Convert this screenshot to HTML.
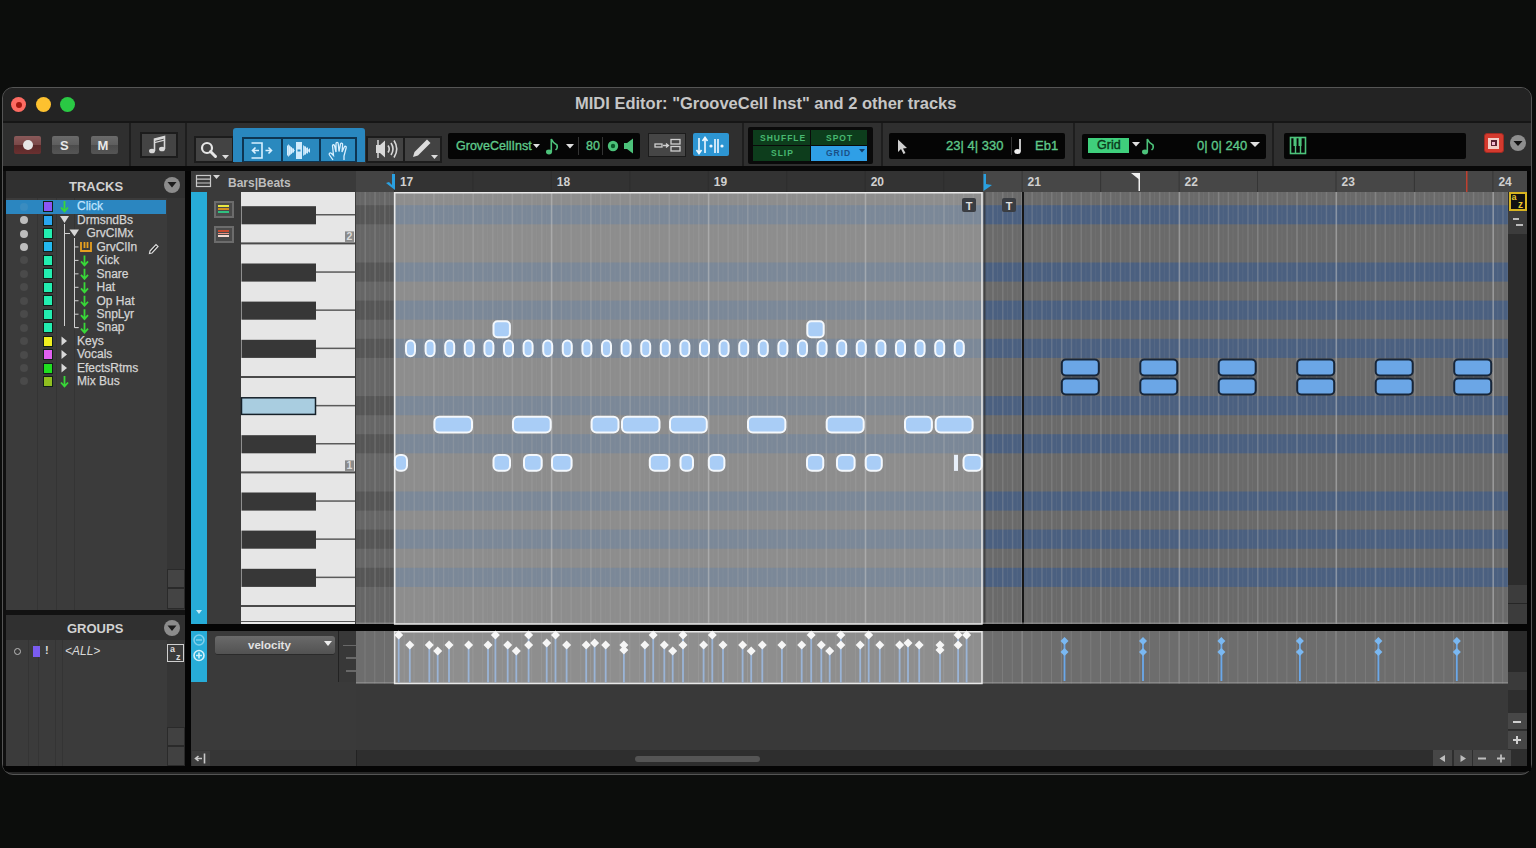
<!DOCTYPE html><html><head><meta charset="utf-8"><style>
*{margin:0;padding:0;box-sizing:border-box}
html,body{width:1536px;height:848px;overflow:hidden;background:#0c0d0c;font-family:"Liberation Sans",sans-serif}
.a{position:absolute}
.t{position:absolute;white-space:nowrap;line-height:1}
svg{position:absolute;left:0;top:0}
</style></head><body><div class="a" style="left:2px;top:87px;width:1530px;height:688px;background:#262626;border-radius:11px;border:1px solid #555"></div>
<div class="a" style="left:3px;top:88px;width:1528px;height:34px;background:#232323;border-radius:10px 10px 0 0"></div>
<div class="t" style="left:575px;top:95px;font-size:16.5px;font-weight:bold;color:#c6c6c6;">MIDI Editor: "GrooveCell Inst" and 2 other tracks</div>
<div class="a" style="left:11.0px;top:96.5px;width:15px;height:15px;background:#fd6b62;border-radius:50%"></div>
<div class="a" style="left:35.8px;top:96.5px;width:15px;height:15px;background:#fdc12f;border-radius:50%"></div>
<div class="a" style="left:60.2px;top:96.5px;width:15px;height:15px;background:#2ac944;border-radius:50%"></div>
<div class="a" style="left:15.5px;top:101.5px;width:6px;height:6px;background:#a0170f;border-radius:50%"></div>
<div class="a" style="left:3px;top:122px;width:1528px;height:44px;background:#2f2f2f;"></div>
<div class="a" style="left:3px;top:166px;width:1528px;height:5px;background:#080808;"></div>
<div class="a" style="left:129px;top:122px;width:1.5px;height:44px;background:#1e1e1e;"></div>
<div class="a" style="left:185px;top:122px;width:1.5px;height:44px;background:#1e1e1e;"></div>
<div class="a" style="left:742px;top:122px;width:1.5px;height:44px;background:#1e1e1e;"></div>
<div class="a" style="left:881px;top:122px;width:1.5px;height:44px;background:#1e1e1e;"></div>
<div class="a" style="left:1073px;top:122px;width:1.5px;height:44px;background:#1e1e1e;"></div>
<div class="a" style="left:1272px;top:122px;width:1.5px;height:44px;background:#1e1e1e;"></div>
<div class="a" style="left:14px;top:136px;width:27px;height:18px;background:#6a3a3a;border-radius:2px;background:linear-gradient(#8a5a5a 0,#7a4848 50%,#5a2a2a 51%,#6a3030 100%)"></div>
<div class="a" style="left:23px;top:140px;width:10px;height:10px;background:#e6e6e6;border-radius:50%"></div>
<div class="a" style="left:52px;top:136px;width:27px;height:18px;background:#555;border-radius:2px;background:linear-gradient(#6a6a6a 0,#5e5e5e 50%,#4c4c4c 51%,#555 100%)"></div>
<div class="t" style="left:60px;top:139px;font-size:13px;font-weight:bold;color:#e8e8e8;">S</div>
<div class="a" style="left:91px;top:136px;width:27px;height:18px;background:#555;border-radius:2px;background:linear-gradient(#6a6a6a 0,#5e5e5e 50%,#4c4c4c 51%,#555 100%)"></div>
<div class="t" style="left:97.5px;top:139px;font-size:13px;font-weight:bold;color:#e8e8e8;">M</div>
<div class="a" style="left:140px;top:132px;width:38px;height:26px;background:#444;border:2px solid #1c1c1c"></div>
<svg width="1536" height="848" style="pointer-events:none"><g fill="#d8d8d8" stroke="#d8d8d8"><ellipse cx="152" cy="151" rx="3" ry="2.3" stroke="none"/><ellipse cx="162" cy="149" rx="3" ry="2.3" stroke="none"/><path d="M154.5 151 V139 L164.5 136.5 V149" fill="none" stroke-width="1.6"/><path d="M154.5 139 L164.5 136.5 V138.5 L154.5 141Z" stroke="none"/><path d="M154.5 142 L164.5 139.5 V140.7 L154.5 143.2Z" stroke="none"/></g></svg>
<div class="a" style="left:194px;top:136px;width:40px;height:27px;background:#434343;border:2px solid #1c1c1c"></div>
<div class="a" style="left:233px;top:128px;width:132px;height:34px;background:#2987bf;border-radius:3px 3px 0 0"></div>
<div class="a" style="left:241.5px;top:136.5px;width:115px;height:25.5px;background:#0e3552;"></div>
<div class="a" style="left:243.5px;top:138.5px;width:37px;height:22px;background:#2a89be;"></div>
<div class="a" style="left:282.5px;top:138.5px;width:36px;height:22px;background:#2a89be;"></div>
<div class="a" style="left:320.5px;top:138.5px;width:34px;height:22px;background:#2a89be;"></div>
<div class="a" style="left:366px;top:136px;width:76px;height:27px;background:#1c1c1c;"></div>
<div class="a" style="left:368px;top:138px;width:35px;height:23px;background:#434343;"></div>
<div class="a" style="left:405px;top:138px;width:35px;height:23px;background:#434343;"></div>
<div class="a" style="left:448px;top:133px;width:192px;height:26px;background:#050505;border-radius:2px"></div>
<div class="t" style="left:456px;top:139.5px;font-size:12.5px;font-weight:normal;color:#5fc98a;-webkit-text-stroke:0.35px #5fc98a">GroveCellInst</div>
<div class="a" style="left:578px;top:137px;width:1px;height:18px;background:#333;"></div>
<div class="a" style="left:602px;top:137px;width:1px;height:18px;background:#333;"></div>
<div class="t" style="left:586px;top:139.5px;font-size:12.5px;font-weight:normal;color:#5fc98a;-webkit-text-stroke:0.35px #5fc98a">80</div>
<div class="a" style="left:648px;top:133px;width:38px;height:24px;background:#464646;border:1.5px solid #1c1c1c"></div>
<div class="a" style="left:693px;top:133px;width:36px;height:23px;background:#2d95d2;border-radius:2px"></div>
<div class="a" style="left:748px;top:127px;width:125px;height:37px;background:#0a0a0a;border-radius:2px"></div>
<div class="a" style="left:753px;top:130px;width:57px;height:15px;background:#0d3d1c;"></div>
<div class="a" style="left:811px;top:130px;width:56px;height:15px;background:#0d3d1c;"></div>
<div class="a" style="left:753px;top:146px;width:57px;height:14.5px;background:#0d3d1c;"></div>
<div class="a" style="left:811px;top:146px;width:56px;height:14.5px;background:#2f9fe6;"></div>
<div class="t" style="left:760px;top:133.5px;font-size:8.5px;font-weight:bold;color:#48b870;letter-spacing:1px">SHUFFLE</div>
<div class="t" style="left:826px;top:133.5px;font-size:8.5px;font-weight:bold;color:#48b870;letter-spacing:1px">SPOT</div>
<div class="t" style="left:771px;top:148.5px;font-size:8.5px;font-weight:bold;color:#48b870;letter-spacing:1px">SLIP</div>
<div class="t" style="left:826px;top:148.5px;font-size:8.5px;font-weight:bold;color:#1a4f86;letter-spacing:1px">GRID</div>
<svg width="1536" height="848"><path d="M859 149 H865 L862 152.5Z" fill="#12406e"/></svg>
<div class="a" style="left:889px;top:133px;width:176px;height:26px;background:#050505;border-radius:2px"></div>
<div class="t" style="left:946px;top:138.5px;font-size:13px;font-weight:normal;color:#5fc98a;-webkit-text-stroke:0.35px #5fc98a">23| 4| 330</div>
<div class="t" style="left:1035px;top:138.5px;font-size:13px;font-weight:normal;color:#5fc98a;-webkit-text-stroke:0.35px #5fc98a">Eb1</div>
<div class="a" style="left:1011px;top:137px;width:1px;height:18px;background:#333;"></div>
<div class="a" style="left:1082px;top:133.5px;width:184px;height:25.5px;background:#050505;border-radius:2px"></div>
<div class="a" style="left:1087.5px;top:137.5px;width:41.5px;height:15px;background:#3fcf7c;"></div>
<div class="t" style="left:1097px;top:139px;font-size:12.5px;font-weight:normal;color:#0b3a1b;-webkit-text-stroke:0.4px #0b3a1b">Grid</div>
<div class="t" style="left:1197px;top:138.5px;font-size:13px;font-weight:normal;color:#5fc98a;-webkit-text-stroke:0.35px #5fc98a">0| 0| 240</div>
<div class="a" style="left:1284px;top:133px;width:182px;height:26px;background:#050505;border-radius:2px"></div>
<div class="a" style="left:1483.5px;top:133px;width:20px;height:20px;background:#d43a2e;border-radius:3px;border:1.5px solid #a02a22"></div>
<div class="a" style="left:1488px;top:137.5px;width:11px;height:11px;background:#f2cfc8;"></div>
<div class="a" style="left:1490.5px;top:140px;width:6px;height:6px;background:#5a2232;"></div>
<div class="a" style="left:1492px;top:141.5px;width:3px;height:3px;background:#f0b8d0;"></div>
<div class="a" style="left:1510px;top:135px;width:16px;height:16px;background:#8e8e8e;border-radius:50%"></div>
<div class="a" style="left:3px;top:121px;width:1528px;height:1.5px;background:#161616;"></div>
<div class="a" style="left:3px;top:171px;width:3px;height:596px;background:#101010;"></div>
<div class="a" style="left:6px;top:171px;width:179px;height:439px;background:#3b3b3b;"></div>
<div class="a" style="left:6px;top:171px;width:179px;height:27px;background:#303030;"></div>
<div class="t" style="left:69px;top:179.5px;font-size:13px;font-weight:bold;color:#d2d2d2;">TRACKS</div>
<div class="a" style="left:164px;top:176.5px;width:16px;height:16px;background:#8c8c8c;border-radius:50%"></div>
<div class="a" style="left:167px;top:198px;width:18px;height:412px;background:#353535;"></div>
<div class="a" style="left:167px;top:569px;width:18px;height:19px;background:#444;border:1px solid #2a2a2a"></div>
<div class="a" style="left:167px;top:588px;width:18px;height:21px;background:#444;border:1px solid #2a2a2a"></div>
<div class="a" style="left:37px;top:198px;width:1px;height:412px;background:#343434;"></div>
<div class="a" style="left:56px;top:198px;width:1px;height:412px;background:#343434;"></div>
<div class="a" style="left:74px;top:198px;width:1px;height:412px;background:#343434;"></div>
<div class="a" style="left:6px;top:200px;width:160px;height:13.5px;background:#2b86c0;"></div>
<div class="a" style="left:19.5px;top:202.6px;width:8px;height:8px;background:#3a8cc0;border-radius:50%"></div>
<div class="a" style="left:43px;top:201.1px;width:10px;height:11px;background:#8b55f5;border:1.5px solid #102018"></div>
<div class="t" style="left:77px;top:200.4px;font-size:12px;font-weight:normal;color:#bfe4ff;-webkit-text-stroke:0.25px #bfe4ff">Click</div>
<div class="a" style="left:19.5px;top:216.04999999999998px;width:8px;height:8px;background:#bdbdbd;border-radius:50%"></div>
<div class="a" style="left:43px;top:214.54999999999998px;width:10px;height:11px;background:#2aa6f0;border:1.5px solid #102018"></div>
<div class="t" style="left:77px;top:213.85px;font-size:12px;font-weight:normal;color:#d4d4d4;-webkit-text-stroke:0.25px #d4d4d4">DrmsndBs</div>
<div class="a" style="left:19.5px;top:229.5px;width:8px;height:8px;background:#bdbdbd;border-radius:50%"></div>
<div class="a" style="left:43px;top:228.0px;width:10px;height:11px;background:#22eeb0;border:1.5px solid #102018"></div>
<div class="t" style="left:86.5px;top:227.3px;font-size:12px;font-weight:normal;color:#d4d4d4;-webkit-text-stroke:0.25px #d4d4d4">GrvClMx</div>
<div class="a" style="left:19.5px;top:242.95px;width:8px;height:8px;background:#bdbdbd;border-radius:50%"></div>
<div class="a" style="left:43px;top:241.45px;width:10px;height:11px;background:#23b8f0;border:1.5px solid #102018"></div>
<div class="t" style="left:96.5px;top:240.75px;font-size:12px;font-weight:normal;color:#d4d4d4;-webkit-text-stroke:0.25px #d4d4d4">GrvClIn</div>
<div class="a" style="left:19.5px;top:256.4px;width:8px;height:8px;background:#4a4a4a;border-radius:50%"></div>
<div class="a" style="left:43px;top:254.89999999999998px;width:10px;height:11px;background:#22eeb0;border:1.5px solid #102018"></div>
<div class="t" style="left:96.5px;top:254.2px;font-size:12px;font-weight:normal;color:#d4d4d4;-webkit-text-stroke:0.25px #d4d4d4">Kick</div>
<div class="a" style="left:19.5px;top:269.85px;width:8px;height:8px;background:#4a4a4a;border-radius:50%"></div>
<div class="a" style="left:43px;top:268.35px;width:10px;height:11px;background:#22eeb0;border:1.5px solid #102018"></div>
<div class="t" style="left:96.5px;top:267.65000000000003px;font-size:12px;font-weight:normal;color:#d4d4d4;-webkit-text-stroke:0.25px #d4d4d4">Snare</div>
<div class="a" style="left:19.5px;top:283.29999999999995px;width:8px;height:8px;background:#4a4a4a;border-radius:50%"></div>
<div class="a" style="left:43px;top:281.79999999999995px;width:10px;height:11px;background:#22eeb0;border:1.5px solid #102018"></div>
<div class="t" style="left:96.5px;top:281.09999999999997px;font-size:12px;font-weight:normal;color:#d4d4d4;-webkit-text-stroke:0.25px #d4d4d4">Hat</div>
<div class="a" style="left:19.5px;top:296.75px;width:8px;height:8px;background:#4a4a4a;border-radius:50%"></div>
<div class="a" style="left:43px;top:295.25px;width:10px;height:11px;background:#22eeb0;border:1.5px solid #102018"></div>
<div class="t" style="left:96.5px;top:294.55px;font-size:12px;font-weight:normal;color:#d4d4d4;-webkit-text-stroke:0.25px #d4d4d4">Op Hat</div>
<div class="a" style="left:19.5px;top:310.2px;width:8px;height:8px;background:#4a4a4a;border-radius:50%"></div>
<div class="a" style="left:43px;top:308.7px;width:10px;height:11px;background:#22eeb0;border:1.5px solid #102018"></div>
<div class="t" style="left:96.5px;top:308.0px;font-size:12px;font-weight:normal;color:#d4d4d4;-webkit-text-stroke:0.25px #d4d4d4">SnpLyr</div>
<div class="a" style="left:19.5px;top:323.65px;width:8px;height:8px;background:#4a4a4a;border-radius:50%"></div>
<div class="a" style="left:43px;top:322.15px;width:10px;height:11px;background:#22eeb0;border:1.5px solid #102018"></div>
<div class="t" style="left:96.5px;top:321.45px;font-size:12px;font-weight:normal;color:#d4d4d4;-webkit-text-stroke:0.25px #d4d4d4">Snap</div>
<div class="a" style="left:19.5px;top:337.1px;width:8px;height:8px;background:#4a4a4a;border-radius:50%"></div>
<div class="a" style="left:43px;top:335.6px;width:10px;height:11px;background:#f0f020;border:1.5px solid #102018"></div>
<div class="t" style="left:77px;top:334.90000000000003px;font-size:12px;font-weight:normal;color:#d4d4d4;-webkit-text-stroke:0.25px #d4d4d4">Keys</div>
<div class="a" style="left:19.5px;top:350.54999999999995px;width:8px;height:8px;background:#4a4a4a;border-radius:50%"></div>
<div class="a" style="left:43px;top:349.04999999999995px;width:10px;height:11px;background:#e060f0;border:1.5px solid #102018"></div>
<div class="t" style="left:77px;top:348.34999999999997px;font-size:12px;font-weight:normal;color:#d4d4d4;-webkit-text-stroke:0.25px #d4d4d4">Vocals</div>
<div class="a" style="left:19.5px;top:364.0px;width:8px;height:8px;background:#4a4a4a;border-radius:50%"></div>
<div class="a" style="left:43px;top:362.5px;width:10px;height:11px;background:#20e020;border:1.5px solid #102018"></div>
<div class="t" style="left:77px;top:361.8px;font-size:12px;font-weight:normal;color:#d4d4d4;-webkit-text-stroke:0.25px #d4d4d4">EfectsRtms</div>
<div class="a" style="left:19.5px;top:377.45px;width:8px;height:8px;background:#4a4a4a;border-radius:50%"></div>
<div class="a" style="left:43px;top:375.95px;width:10px;height:11px;background:#90c020;border:1.5px solid #102018"></div>
<div class="t" style="left:77px;top:375.25px;font-size:12px;font-weight:normal;color:#d4d4d4;-webkit-text-stroke:0.25px #d4d4d4">Mix Bus</div>
<svg width="1536" height="848"><g stroke="#d0d0d0" stroke-width="1" fill="none"><path d="M64.5 224 V326"/><path d="M74.5 238 V327.5 H78.5"/><path d="M74.5 246.95 H78.5"/><path d="M74.5 260.4 H78.5"/><path d="M74.5 273.85 H78.5"/><path d="M74.5 287.29999999999995 H78.5"/><path d="M74.5 300.75 H78.5"/><path d="M74.5 314.2 H78.5"/><path d="M74.5 327.65 H78.5"/><path d="M64.5 233.5 H70"/></g><g fill="#d8d8d8"><path d="M60 216 H69 L64.5 223Z"/><path d="M69.5 229.5 H79 L74.5 236.5Z"/><path d="M61.5 336.6 L67 341.1 L61.5 345.6Z"/><path d="M61.5 350.04999999999995 L67 354.54999999999995 L61.5 359.04999999999995Z"/><path d="M61.5 363.5 L67 368.0 L61.5 372.5Z"/></g><g stroke="#38d838" stroke-width="1.8" fill="none"><path d="M64.5 201 V211 M61 207.5 L64.5 211.5 L68 207.5"/><path d="M64.5 376 V386 M61 382.5 L64.5 386.5 L68 382.5"/><path d="M84.5 255.39999999999998 V264.9 M81 261.4 L84.5 265.4 L88 261.4"/><path d="M84.5 268.85 V278.35 M81 274.85 L84.5 278.85 L88 274.85"/><path d="M84.5 282.29999999999995 V291.79999999999995 M81 288.29999999999995 L84.5 292.29999999999995 L88 288.29999999999995"/><path d="M84.5 295.75 V305.25 M81 301.75 L84.5 305.75 L88 301.75"/><path d="M84.5 309.2 V318.7 M81 315.2 L84.5 319.2 L88 315.2"/><path d="M84.5 322.65 V332.15 M81 328.65 L84.5 332.65 L88 328.65"/></g><path d="M81 242 V251 H91 V242 M84.5 242 V248 M87.5 242 V248" stroke="#e8a020" stroke-width="1.8" fill="none"/><path d="M150 251 L156 244.5 L158 246.5 L152 253 L149.5 253.5Z" fill="#222" stroke="#ddd" stroke-width="1.2"/></svg>
<div class="a" style="left:6px;top:610px;width:179px;height:5px;background:#121212;"></div>
<div class="a" style="left:6px;top:615px;width:179px;height:151px;background:#3b3b3b;"></div>
<div class="a" style="left:6px;top:615px;width:179px;height:25px;background:#303030;"></div>
<div class="t" style="left:67px;top:622px;font-size:13px;font-weight:bold;color:#d2d2d2;">GROUPS</div>
<div class="a" style="left:164px;top:620px;width:16px;height:16px;background:#8c8c8c;border-radius:50%"></div>
<div class="a" style="left:167px;top:640px;width:18px;height:126px;background:#353535;"></div>
<div class="a" style="left:167px;top:727px;width:18px;height:19px;background:#414141;border:1px solid #2a2a2a"></div>
<div class="a" style="left:167px;top:746px;width:18px;height:20px;background:#414141;border:1px solid #2a2a2a"></div>
<div class="a" style="left:28px;top:640px;width:1px;height:126px;background:#343434;"></div>
<div class="a" style="left:38px;top:640px;width:1px;height:126px;background:#343434;"></div>
<div class="a" style="left:55px;top:640px;width:1px;height:126px;background:#343434;"></div>
<div class="a" style="left:62px;top:640px;width:1px;height:126px;background:#343434;"></div>
<div class="a" style="left:13.5px;top:647.5px;width:7px;height:7px;background:transparent;border:1px solid #bbb;border-radius:50%"></div>
<div class="a" style="left:33px;top:645.5px;width:7px;height:11px;background:#7a5cf0;"></div>
<div class="t" style="left:45px;top:645px;font-size:11px;font-weight:bold;color:#ddd;">!</div>
<div class="t" style="left:65px;top:645px;font-size:12px;font-weight:normal;color:#d8d8d8;font-style:italic">&lt;ALL&gt;</div>
<div class="a" style="left:167px;top:644px;width:17px;height:18px;background:#3b3b3b;border:1px solid #cfcfcf"></div>
<div class="a" style="left:185px;top:171px;width:6px;height:596px;background:#050505;"></div>
<div class="a" style="left:191px;top:171px;width:165px;height:21px;background:#3a3a3a;"></div>
<div class="t" style="left:228px;top:176.5px;font-size:12px;font-weight:bold;color:#bdbdbd;">Bars|Beats</div>
<div class="a" style="left:356px;top:171px;width:37.9px;height:21px;background:#444;"></div>
<div class="a" style="left:393.9px;top:171px;width:589px;height:21px;background:#333;"></div>
<div class="a" style="left:982.9px;top:171px;width:544px;height:21px;background:#474747;"></div>
<div class="a" style="left:191px;top:192px;width:16px;height:432px;background:#27acd8;"></div>
<div class="a" style="left:207px;top:192px;width:34px;height:432px;background:#3a3a3a;"></div>
<div class="a" style="left:213.5px;top:201px;width:20.5px;height:17px;background:#4a4a4a;border:2px solid #6c6c6c"></div>
<div class="a" style="left:213.5px;top:225.5px;width:20.5px;height:17px;background:#4a4a4a;border:2px solid #6c6c6c"></div>
<div class="a" style="left:218px;top:205px;width:11px;height:2px;background:#e8e840;"></div>
<div class="a" style="left:218px;top:208px;width:11px;height:1.5px;background:#d09020;"></div>
<div class="a" style="left:218px;top:210.5px;width:11px;height:2px;background:#30c080;"></div>
<div class="a" style="left:218px;top:229.5px;width:11px;height:2px;background:#c84a30;"></div>
<div class="a" style="left:218px;top:232.5px;width:11px;height:1.5px;background:#f09080;"></div>
<div class="a" style="left:218px;top:235px;width:11px;height:2px;background:#f4d8d0;"></div>
<div class="a" style="left:241px;top:192px;width:114px;height:432px;background:#e6e6e6;"></div>
<div class="a" style="left:354.5px;top:192px;width:2px;height:432px;background:#3e3e3e"></div>
<div class="a" style="left:1508px;top:192px;width:19px;height:432px;background:#2c2c2c;"></div>
<div class="a" style="left:1509px;top:192px;width:18px;height:19px;background:#111;border:2px solid #d8b420"></div>
<div class="t" style="left:1511.5px;top:193px;font-size:9px;font-weight:bold;color:#e8c830">a</div>
<div class="t" style="left:1518px;top:200px;font-size:10px;font-weight:bold;color:#e8c830">z</div>
<div class="a" style="left:1508px;top:211px;width:19px;height:23px;background:#3c3c3c;"></div>
<div class="a" style="left:1513px;top:218px;width:6px;height:1.5px;background:#bbb;"></div>
<div class="a" style="left:1516px;top:224px;width:7px;height:1.5px;background:#bbb;"></div>
<div class="a" style="left:1508px;top:585px;width:19px;height:19px;background:#3c3c3c;border-bottom:1px solid #262626"></div>
<div class="a" style="left:1508px;top:604px;width:19px;height:20px;background:#3c3c3c;"></div>
<div class="a" style="left:1527px;top:171px;width:4px;height:600px;background:#050505;"></div>
<div class="a" style="left:185px;top:624px;width:1342px;height:7px;background:#050505;"></div>
<div class="a" style="left:191px;top:631px;width:16px;height:51px;background:#27acd8;"></div>
<svg width="1536" height="848"><circle cx="199" cy="640" r="5" fill="none" stroke="#7fd0ec" stroke-width="1.5"/><path d="M196 640 H202" stroke="#7fd0ec" stroke-width="1.5"/><circle cx="199" cy="655.5" r="5" fill="none" stroke="#d0f0fa" stroke-width="1.6"/><path d="M196 655.5 H202 M199 652.5 V658.5" stroke="#d0f0fa" stroke-width="1.6"/><path d="M196 610 H202 L199 614Z" fill="#c8ecf8"/></svg>
<div class="a" style="left:207px;top:631px;width:131px;height:51px;background:#3a3a3a;"></div>
<div class="a" style="left:215px;top:636px;width:120px;height:19px;background:#5a5a5a;border-radius:3px;background:linear-gradient(#6a6a6a,#525252);border-bottom:1px solid #2a2a2a"></div>
<div class="t" style="left:248px;top:640px;font-size:11.5px;font-weight:bold;color:#e2e2e2;">velocity</div>
<svg width="1536" height="848"><path d="M324 641 H332 L328 646Z" fill="#eee"/></svg>
<div class="a" style="left:338px;top:631px;width:18px;height:51px;background:#383838;"></div>
<div class="a" style="left:338px;top:631px;width:1px;height:51px;background:#222;"></div>
<div class="a" style="left:343px;top:644.5px;width:13px;height:1.5px;background:#686868;"></div>
<div class="a" style="left:346px;top:657px;width:10px;height:1.5px;background:#686868;"></div>
<div class="a" style="left:346px;top:670px;width:10px;height:1.5px;background:#686868;"></div>
<div class="a" style="left:1508px;top:631px;width:19px;height:41px;background:#2a2a2a;"></div>
<div class="a" style="left:1508px;top:672px;width:19px;height:18px;background:#3a3a3a;"></div>
<div class="a" style="left:191px;top:682px;width:1317px;height:68px;background:#393939;"></div>
<div class="a" style="left:191px;top:682px;width:165px;height:68px;background:#3a3a3a;"></div>
<div class="a" style="left:1508px;top:690px;width:19px;height:60px;background:#2e2e2e;"></div>
<div class="a" style="left:1508px;top:713px;width:19px;height:17px;background:#474747;border-bottom:1px solid #2a2a2a"></div>
<div class="a" style="left:1508px;top:731px;width:19px;height:18px;background:#474747;"></div>
<div class="a" style="left:1513px;top:721px;width:8px;height:1.5px;background:#cfcfcf;"></div>
<div class="a" style="left:1513px;top:739px;width:8px;height:1.5px;background:#cfcfcf;"></div>
<div class="a" style="left:1516.3px;top:735.7px;width:1.5px;height:8px;background:#cfcfcf;"></div>
<div class="a" style="left:191px;top:750px;width:1336px;height:17.5px;background:#2e2e2e;"></div>
<div class="a" style="left:191px;top:750px;width:165px;height:17.5px;background:#363636;"></div>
<div class="a" style="left:192px;top:751px;width:18px;height:15px;background:#3e3e3e;"></div>
<div class="a" style="left:356px;top:750px;width:1px;height:17.5px;background:#222;"></div>
<svg width="1536" height="848"><path d="M202 758.5 H196 M198.5 756 L195.5 758.5 L198.5 761 M204.5 753.5 V763.5" stroke="#c8c8c8" stroke-width="1.6" fill="none"/></svg>
<div class="a" style="left:635px;top:756px;width:125px;height:6px;background:#555;border-radius:3px"></div>
<div class="a" style="left:1433px;top:750px;width:18.5px;height:17.5px;background:#474747;"></div>
<div class="a" style="left:1453.5px;top:750px;width:18.5px;height:17.5px;background:#474747;"></div>
<div class="a" style="left:1473px;top:750px;width:18.5px;height:17.5px;background:#474747;"></div>
<div class="a" style="left:1492px;top:750px;width:18.5px;height:17.5px;background:#474747;"></div>
<svg width="1536" height="848"><path d="M1439.5 758.5 L1445 755 V762Z M1466 758.5 L1460.5 755 V762Z" fill="#bdbdbd"/><path d="M1478 758.5 H1486 M1497 758.5 H1505 M1501 754.5 V762.5" stroke="#bdbdbd" stroke-width="1.8"/></svg>
<div class="a" style="left:3px;top:766px;width:1528px;height:5.5px;background:#050505;border-radius:0 0 7px 7px"></div>
<div class="a" style="left:241px;top:620.5px;width:114px;height:1.5px;background:#555;"></div>
<svg width="1536" height="848"><rect x="356" y="192" width="1152" height="432" fill="#6a6a6a"/><rect x="356" y="192" width="37.9" height="432" fill="#666"/><rect x="393.9" y="192" width="588.8000000000001" height="432" fill="#8d8d8d"/><rect x="356" y="205.2" width="37.9" height="19.1" fill="#565656"/><rect x="982.7" y="205.2" width="525.3" height="19.1" fill="#4b6080"/><rect x="393.9" y="205.2" width="588.8" height="19.1" fill="#7b8898"/><rect x="356" y="262.5" width="37.9" height="19.1" fill="#565656"/><rect x="982.7" y="262.5" width="525.3" height="19.1" fill="#4b6080"/><rect x="393.9" y="262.5" width="588.8" height="19.1" fill="#7b8898"/><rect x="356" y="300.6" width="37.9" height="19.1" fill="#565656"/><rect x="982.7" y="300.6" width="525.3" height="19.1" fill="#4b6080"/><rect x="393.9" y="300.6" width="588.8" height="19.1" fill="#7b8898"/><rect x="356" y="338.8" width="37.9" height="19.1" fill="#565656"/><rect x="982.7" y="338.8" width="525.3" height="19.1" fill="#4b6080"/><rect x="393.9" y="338.8" width="588.8" height="19.1" fill="#7b8898"/><rect x="356" y="396.1" width="37.9" height="19.1" fill="#565656"/><rect x="982.7" y="396.1" width="525.3" height="19.1" fill="#4b6080"/><rect x="393.9" y="396.1" width="588.8" height="19.1" fill="#7b8898"/><rect x="356" y="434.2" width="37.9" height="19.1" fill="#565656"/><rect x="982.7" y="434.2" width="525.3" height="19.1" fill="#4b6080"/><rect x="393.9" y="434.2" width="588.8" height="19.1" fill="#7b8898"/><rect x="356" y="491.5" width="37.9" height="19.1" fill="#565656"/><rect x="982.7" y="491.5" width="525.3" height="19.1" fill="#4b6080"/><rect x="393.9" y="491.5" width="588.8" height="19.1" fill="#7b8898"/><rect x="356" y="529.6" width="37.9" height="19.1" fill="#565656"/><rect x="982.7" y="529.6" width="525.3" height="19.1" fill="#4b6080"/><rect x="393.9" y="529.6" width="588.8" height="19.1" fill="#7b8898"/><rect x="356" y="567.8" width="37.9" height="19.1" fill="#565656"/><rect x="982.7" y="567.8" width="525.3" height="19.1" fill="#4b6080"/><rect x="393.9" y="567.8" width="588.8" height="19.1" fill="#7b8898"/><rect x="364.5" y="192" width="1.5" height="432" fill="#b0b0b0" opacity="0.24"/><rect x="374.3" y="192" width="1.5" height="432" fill="#b0b0b0" opacity="0.24"/><rect x="384.1" y="192" width="1.5" height="432" fill="#b0b0b0" opacity="0.24"/><rect x="393.9" y="192" width="1.6" height="432" fill="#c8c8c8" opacity="0.5"/><rect x="403.7" y="192" width="1.5" height="432" fill="#b0b0b0" opacity="0.25"/><rect x="413.5" y="192" width="1.5" height="432" fill="#b0b0b0" opacity="0.25"/><rect x="423.3" y="192" width="1.5" height="432" fill="#b0b0b0" opacity="0.25"/><rect x="433.1" y="192" width="1.6" height="432" fill="#b8b8b8" opacity="0.32"/><rect x="442.9" y="192" width="1.5" height="432" fill="#b0b0b0" opacity="0.25"/><rect x="452.7" y="192" width="1.5" height="432" fill="#b0b0b0" opacity="0.25"/><rect x="462.6" y="192" width="1.5" height="432" fill="#b0b0b0" opacity="0.25"/><rect x="472.4" y="192" width="1.6" height="432" fill="#b8b8b8" opacity="0.32"/><rect x="482.2" y="192" width="1.5" height="432" fill="#b0b0b0" opacity="0.25"/><rect x="492.0" y="192" width="1.5" height="432" fill="#b0b0b0" opacity="0.25"/><rect x="501.8" y="192" width="1.5" height="432" fill="#b0b0b0" opacity="0.25"/><rect x="511.6" y="192" width="1.6" height="432" fill="#b8b8b8" opacity="0.32"/><rect x="521.4" y="192" width="1.5" height="432" fill="#b0b0b0" opacity="0.25"/><rect x="531.2" y="192" width="1.5" height="432" fill="#b0b0b0" opacity="0.25"/><rect x="541.0" y="192" width="1.5" height="432" fill="#b0b0b0" opacity="0.25"/><rect x="550.8" y="192" width="1.6" height="432" fill="#c8c8c8" opacity="0.5"/><rect x="560.6" y="192" width="1.5" height="432" fill="#b0b0b0" opacity="0.25"/><rect x="570.4" y="192" width="1.5" height="432" fill="#b0b0b0" opacity="0.25"/><rect x="580.3" y="192" width="1.5" height="432" fill="#b0b0b0" opacity="0.25"/><rect x="590.1" y="192" width="1.6" height="432" fill="#b8b8b8" opacity="0.32"/><rect x="599.9" y="192" width="1.5" height="432" fill="#b0b0b0" opacity="0.25"/><rect x="609.7" y="192" width="1.5" height="432" fill="#b0b0b0" opacity="0.25"/><rect x="619.5" y="192" width="1.5" height="432" fill="#b0b0b0" opacity="0.25"/><rect x="629.3" y="192" width="1.6" height="432" fill="#b8b8b8" opacity="0.32"/><rect x="639.1" y="192" width="1.5" height="432" fill="#b0b0b0" opacity="0.25"/><rect x="648.9" y="192" width="1.5" height="432" fill="#b0b0b0" opacity="0.25"/><rect x="658.7" y="192" width="1.5" height="432" fill="#b0b0b0" opacity="0.25"/><rect x="668.5" y="192" width="1.6" height="432" fill="#b8b8b8" opacity="0.32"/><rect x="678.3" y="192" width="1.5" height="432" fill="#b0b0b0" opacity="0.25"/><rect x="688.1" y="192" width="1.5" height="432" fill="#b0b0b0" opacity="0.25"/><rect x="698.0" y="192" width="1.5" height="432" fill="#b0b0b0" opacity="0.25"/><rect x="707.8" y="192" width="1.6" height="432" fill="#c8c8c8" opacity="0.5"/><rect x="717.6" y="192" width="1.5" height="432" fill="#b0b0b0" opacity="0.25"/><rect x="727.4" y="192" width="1.5" height="432" fill="#b0b0b0" opacity="0.25"/><rect x="737.2" y="192" width="1.5" height="432" fill="#b0b0b0" opacity="0.25"/><rect x="747.0" y="192" width="1.6" height="432" fill="#b8b8b8" opacity="0.32"/><rect x="756.8" y="192" width="1.5" height="432" fill="#b0b0b0" opacity="0.25"/><rect x="766.6" y="192" width="1.5" height="432" fill="#b0b0b0" opacity="0.25"/><rect x="776.4" y="192" width="1.5" height="432" fill="#b0b0b0" opacity="0.25"/><rect x="786.2" y="192" width="1.6" height="432" fill="#b8b8b8" opacity="0.32"/><rect x="796.0" y="192" width="1.5" height="432" fill="#b0b0b0" opacity="0.25"/><rect x="805.8" y="192" width="1.5" height="432" fill="#b0b0b0" opacity="0.25"/><rect x="815.6" y="192" width="1.5" height="432" fill="#b0b0b0" opacity="0.25"/><rect x="825.5" y="192" width="1.6" height="432" fill="#b8b8b8" opacity="0.32"/><rect x="835.3" y="192" width="1.5" height="432" fill="#b0b0b0" opacity="0.25"/><rect x="845.1" y="192" width="1.5" height="432" fill="#b0b0b0" opacity="0.25"/><rect x="854.9" y="192" width="1.5" height="432" fill="#b0b0b0" opacity="0.25"/><rect x="864.7" y="192" width="1.6" height="432" fill="#c8c8c8" opacity="0.5"/><rect x="874.5" y="192" width="1.5" height="432" fill="#b0b0b0" opacity="0.25"/><rect x="884.3" y="192" width="1.5" height="432" fill="#b0b0b0" opacity="0.25"/><rect x="894.1" y="192" width="1.5" height="432" fill="#b0b0b0" opacity="0.25"/><rect x="903.9" y="192" width="1.6" height="432" fill="#b8b8b8" opacity="0.32"/><rect x="913.7" y="192" width="1.5" height="432" fill="#b0b0b0" opacity="0.25"/><rect x="923.5" y="192" width="1.5" height="432" fill="#b0b0b0" opacity="0.25"/><rect x="933.3" y="192" width="1.5" height="432" fill="#b0b0b0" opacity="0.25"/><rect x="943.2" y="192" width="1.6" height="432" fill="#b8b8b8" opacity="0.32"/><rect x="953.0" y="192" width="1.5" height="432" fill="#b0b0b0" opacity="0.25"/><rect x="962.8" y="192" width="1.5" height="432" fill="#b0b0b0" opacity="0.25"/><rect x="972.6" y="192" width="1.5" height="432" fill="#b0b0b0" opacity="0.25"/><rect x="982.4" y="192" width="1.6" height="432" fill="#b8b8b8" opacity="0.32"/><rect x="992.2" y="192" width="1.5" height="432" fill="#b0b0b0" opacity="0.24"/><rect x="1002.0" y="192" width="1.5" height="432" fill="#b0b0b0" opacity="0.24"/><rect x="1011.8" y="192" width="1.5" height="432" fill="#b0b0b0" opacity="0.24"/><rect x="1021.6" y="192" width="1.6" height="432" fill="#c8c8c8" opacity="0.5"/><rect x="1031.4" y="192" width="1.5" height="432" fill="#b0b0b0" opacity="0.24"/><rect x="1041.2" y="192" width="1.5" height="432" fill="#b0b0b0" opacity="0.24"/><rect x="1051.0" y="192" width="1.5" height="432" fill="#b0b0b0" opacity="0.24"/><rect x="1060.9" y="192" width="1.6" height="432" fill="#b8b8b8" opacity="0.3"/><rect x="1070.7" y="192" width="1.5" height="432" fill="#b0b0b0" opacity="0.24"/><rect x="1080.5" y="192" width="1.5" height="432" fill="#b0b0b0" opacity="0.24"/><rect x="1090.3" y="192" width="1.5" height="432" fill="#b0b0b0" opacity="0.24"/><rect x="1100.1" y="192" width="1.6" height="432" fill="#b8b8b8" opacity="0.3"/><rect x="1109.9" y="192" width="1.5" height="432" fill="#b0b0b0" opacity="0.24"/><rect x="1119.7" y="192" width="1.5" height="432" fill="#b0b0b0" opacity="0.24"/><rect x="1129.5" y="192" width="1.5" height="432" fill="#b0b0b0" opacity="0.24"/><rect x="1139.3" y="192" width="1.6" height="432" fill="#b8b8b8" opacity="0.3"/><rect x="1149.1" y="192" width="1.5" height="432" fill="#b0b0b0" opacity="0.24"/><rect x="1158.9" y="192" width="1.5" height="432" fill="#b0b0b0" opacity="0.24"/><rect x="1168.7" y="192" width="1.5" height="432" fill="#b0b0b0" opacity="0.24"/><rect x="1178.6" y="192" width="1.6" height="432" fill="#c8c8c8" opacity="0.5"/><rect x="1188.4" y="192" width="1.5" height="432" fill="#b0b0b0" opacity="0.24"/><rect x="1198.2" y="192" width="1.5" height="432" fill="#b0b0b0" opacity="0.24"/><rect x="1208.0" y="192" width="1.5" height="432" fill="#b0b0b0" opacity="0.24"/><rect x="1217.8" y="192" width="1.6" height="432" fill="#b8b8b8" opacity="0.3"/><rect x="1227.6" y="192" width="1.5" height="432" fill="#b0b0b0" opacity="0.24"/><rect x="1237.4" y="192" width="1.5" height="432" fill="#b0b0b0" opacity="0.24"/><rect x="1247.2" y="192" width="1.5" height="432" fill="#b0b0b0" opacity="0.24"/><rect x="1257.0" y="192" width="1.6" height="432" fill="#b8b8b8" opacity="0.3"/><rect x="1266.8" y="192" width="1.5" height="432" fill="#b0b0b0" opacity="0.24"/><rect x="1276.6" y="192" width="1.5" height="432" fill="#b0b0b0" opacity="0.24"/><rect x="1286.4" y="192" width="1.5" height="432" fill="#b0b0b0" opacity="0.24"/><rect x="1296.2" y="192" width="1.6" height="432" fill="#b8b8b8" opacity="0.3"/><rect x="1306.1" y="192" width="1.5" height="432" fill="#b0b0b0" opacity="0.24"/><rect x="1315.9" y="192" width="1.5" height="432" fill="#b0b0b0" opacity="0.24"/><rect x="1325.7" y="192" width="1.5" height="432" fill="#b0b0b0" opacity="0.24"/><rect x="1335.5" y="192" width="1.6" height="432" fill="#c8c8c8" opacity="0.5"/><rect x="1345.3" y="192" width="1.5" height="432" fill="#b0b0b0" opacity="0.24"/><rect x="1355.1" y="192" width="1.5" height="432" fill="#b0b0b0" opacity="0.24"/><rect x="1364.9" y="192" width="1.5" height="432" fill="#b0b0b0" opacity="0.24"/><rect x="1374.7" y="192" width="1.6" height="432" fill="#b8b8b8" opacity="0.3"/><rect x="1384.5" y="192" width="1.5" height="432" fill="#b0b0b0" opacity="0.24"/><rect x="1394.3" y="192" width="1.5" height="432" fill="#b0b0b0" opacity="0.24"/><rect x="1404.1" y="192" width="1.5" height="432" fill="#b0b0b0" opacity="0.24"/><rect x="1413.9" y="192" width="1.6" height="432" fill="#b8b8b8" opacity="0.3"/><rect x="1423.8" y="192" width="1.5" height="432" fill="#b0b0b0" opacity="0.24"/><rect x="1433.6" y="192" width="1.5" height="432" fill="#b0b0b0" opacity="0.24"/><rect x="1443.4" y="192" width="1.5" height="432" fill="#b0b0b0" opacity="0.24"/><rect x="1453.2" y="192" width="1.6" height="432" fill="#b8b8b8" opacity="0.3"/><rect x="1463.0" y="192" width="1.5" height="432" fill="#b0b0b0" opacity="0.24"/><rect x="1472.8" y="192" width="1.5" height="432" fill="#b0b0b0" opacity="0.24"/><rect x="1482.6" y="192" width="1.5" height="432" fill="#b0b0b0" opacity="0.24"/><rect x="1492.4" y="192" width="1.6" height="432" fill="#c8c8c8" opacity="0.5"/><rect x="1502.2" y="192" width="1.5" height="432" fill="#b0b0b0" opacity="0.24"/><rect x="359.6" y="192" width="1" height="432" fill="#b0b0b0" opacity="0.1"/><rect x="369.4" y="192" width="1" height="432" fill="#b0b0b0" opacity="0.1"/><rect x="379.2" y="192" width="1" height="432" fill="#b0b0b0" opacity="0.1"/><rect x="389.0" y="192" width="1" height="432" fill="#b0b0b0" opacity="0.1"/><rect x="398.8" y="192" width="1" height="432" fill="#b0b0b0" opacity="0.1"/><rect x="408.6" y="192" width="1" height="432" fill="#b0b0b0" opacity="0.1"/><rect x="418.4" y="192" width="1" height="432" fill="#b0b0b0" opacity="0.1"/><rect x="428.2" y="192" width="1" height="432" fill="#b0b0b0" opacity="0.1"/><rect x="438.0" y="192" width="1" height="432" fill="#b0b0b0" opacity="0.1"/><rect x="447.8" y="192" width="1" height="432" fill="#b0b0b0" opacity="0.1"/><rect x="457.7" y="192" width="1" height="432" fill="#b0b0b0" opacity="0.1"/><rect x="467.5" y="192" width="1" height="432" fill="#b0b0b0" opacity="0.1"/><rect x="477.3" y="192" width="1" height="432" fill="#b0b0b0" opacity="0.1"/><rect x="487.1" y="192" width="1" height="432" fill="#b0b0b0" opacity="0.1"/><rect x="496.9" y="192" width="1" height="432" fill="#b0b0b0" opacity="0.1"/><rect x="506.7" y="192" width="1" height="432" fill="#b0b0b0" opacity="0.1"/><rect x="516.5" y="192" width="1" height="432" fill="#b0b0b0" opacity="0.1"/><rect x="526.3" y="192" width="1" height="432" fill="#b0b0b0" opacity="0.1"/><rect x="536.1" y="192" width="1" height="432" fill="#b0b0b0" opacity="0.1"/><rect x="545.9" y="192" width="1" height="432" fill="#b0b0b0" opacity="0.1"/><rect x="555.7" y="192" width="1" height="432" fill="#b0b0b0" opacity="0.1"/><rect x="565.5" y="192" width="1" height="432" fill="#b0b0b0" opacity="0.1"/><rect x="575.4" y="192" width="1" height="432" fill="#b0b0b0" opacity="0.1"/><rect x="585.2" y="192" width="1" height="432" fill="#b0b0b0" opacity="0.1"/><rect x="595.0" y="192" width="1" height="432" fill="#b0b0b0" opacity="0.1"/><rect x="604.8" y="192" width="1" height="432" fill="#b0b0b0" opacity="0.1"/><rect x="614.6" y="192" width="1" height="432" fill="#b0b0b0" opacity="0.1"/><rect x="624.4" y="192" width="1" height="432" fill="#b0b0b0" opacity="0.1"/><rect x="634.2" y="192" width="1" height="432" fill="#b0b0b0" opacity="0.1"/><rect x="644.0" y="192" width="1" height="432" fill="#b0b0b0" opacity="0.1"/><rect x="653.8" y="192" width="1" height="432" fill="#b0b0b0" opacity="0.1"/><rect x="663.6" y="192" width="1" height="432" fill="#b0b0b0" opacity="0.1"/><rect x="673.4" y="192" width="1" height="432" fill="#b0b0b0" opacity="0.1"/><rect x="683.2" y="192" width="1" height="432" fill="#b0b0b0" opacity="0.1"/><rect x="693.0" y="192" width="1" height="432" fill="#b0b0b0" opacity="0.1"/><rect x="702.9" y="192" width="1" height="432" fill="#b0b0b0" opacity="0.1"/><rect x="712.7" y="192" width="1" height="432" fill="#b0b0b0" opacity="0.1"/><rect x="722.5" y="192" width="1" height="432" fill="#b0b0b0" opacity="0.1"/><rect x="732.3" y="192" width="1" height="432" fill="#b0b0b0" opacity="0.1"/><rect x="742.1" y="192" width="1" height="432" fill="#b0b0b0" opacity="0.1"/><rect x="751.9" y="192" width="1" height="432" fill="#b0b0b0" opacity="0.1"/><rect x="761.7" y="192" width="1" height="432" fill="#b0b0b0" opacity="0.1"/><rect x="771.5" y="192" width="1" height="432" fill="#b0b0b0" opacity="0.1"/><rect x="781.3" y="192" width="1" height="432" fill="#b0b0b0" opacity="0.1"/><rect x="791.1" y="192" width="1" height="432" fill="#b0b0b0" opacity="0.1"/><rect x="800.9" y="192" width="1" height="432" fill="#b0b0b0" opacity="0.1"/><rect x="810.7" y="192" width="1" height="432" fill="#b0b0b0" opacity="0.1"/><rect x="820.6" y="192" width="1" height="432" fill="#b0b0b0" opacity="0.1"/><rect x="830.4" y="192" width="1" height="432" fill="#b0b0b0" opacity="0.1"/><rect x="840.2" y="192" width="1" height="432" fill="#b0b0b0" opacity="0.1"/><rect x="850.0" y="192" width="1" height="432" fill="#b0b0b0" opacity="0.1"/><rect x="859.8" y="192" width="1" height="432" fill="#b0b0b0" opacity="0.1"/><rect x="869.6" y="192" width="1" height="432" fill="#b0b0b0" opacity="0.1"/><rect x="879.4" y="192" width="1" height="432" fill="#b0b0b0" opacity="0.1"/><rect x="889.2" y="192" width="1" height="432" fill="#b0b0b0" opacity="0.1"/><rect x="899.0" y="192" width="1" height="432" fill="#b0b0b0" opacity="0.1"/><rect x="908.8" y="192" width="1" height="432" fill="#b0b0b0" opacity="0.1"/><rect x="918.6" y="192" width="1" height="432" fill="#b0b0b0" opacity="0.1"/><rect x="928.4" y="192" width="1" height="432" fill="#b0b0b0" opacity="0.1"/><rect x="938.3" y="192" width="1" height="432" fill="#b0b0b0" opacity="0.1"/><rect x="948.1" y="192" width="1" height="432" fill="#b0b0b0" opacity="0.1"/><rect x="957.9" y="192" width="1" height="432" fill="#b0b0b0" opacity="0.1"/><rect x="967.7" y="192" width="1" height="432" fill="#b0b0b0" opacity="0.1"/><rect x="977.5" y="192" width="1" height="432" fill="#b0b0b0" opacity="0.1"/><rect x="987.3" y="192" width="1" height="432" fill="#b0b0b0" opacity="0.1"/><rect x="997.1" y="192" width="1" height="432" fill="#b0b0b0" opacity="0.1"/><rect x="1006.9" y="192" width="1" height="432" fill="#b0b0b0" opacity="0.1"/><rect x="1016.7" y="192" width="1" height="432" fill="#b0b0b0" opacity="0.1"/><rect x="1026.5" y="192" width="1" height="432" fill="#b0b0b0" opacity="0.1"/><rect x="1036.3" y="192" width="1" height="432" fill="#b0b0b0" opacity="0.1"/><rect x="1046.1" y="192" width="1" height="432" fill="#b0b0b0" opacity="0.1"/><rect x="1055.9" y="192" width="1" height="432" fill="#b0b0b0" opacity="0.1"/><rect x="1065.8" y="192" width="1" height="432" fill="#b0b0b0" opacity="0.1"/><rect x="1075.6" y="192" width="1" height="432" fill="#b0b0b0" opacity="0.1"/><rect x="1085.4" y="192" width="1" height="432" fill="#b0b0b0" opacity="0.1"/><rect x="1095.2" y="192" width="1" height="432" fill="#b0b0b0" opacity="0.1"/><rect x="1105.0" y="192" width="1" height="432" fill="#b0b0b0" opacity="0.1"/><rect x="1114.8" y="192" width="1" height="432" fill="#b0b0b0" opacity="0.1"/><rect x="1124.6" y="192" width="1" height="432" fill="#b0b0b0" opacity="0.1"/><rect x="1134.4" y="192" width="1" height="432" fill="#b0b0b0" opacity="0.1"/><rect x="1144.2" y="192" width="1" height="432" fill="#b0b0b0" opacity="0.1"/><rect x="1154.0" y="192" width="1" height="432" fill="#b0b0b0" opacity="0.1"/><rect x="1163.8" y="192" width="1" height="432" fill="#b0b0b0" opacity="0.1"/><rect x="1173.6" y="192" width="1" height="432" fill="#b0b0b0" opacity="0.1"/><rect x="1183.5" y="192" width="1" height="432" fill="#b0b0b0" opacity="0.1"/><rect x="1193.3" y="192" width="1" height="432" fill="#b0b0b0" opacity="0.1"/><rect x="1203.1" y="192" width="1" height="432" fill="#b0b0b0" opacity="0.1"/><rect x="1212.9" y="192" width="1" height="432" fill="#b0b0b0" opacity="0.1"/><rect x="1222.7" y="192" width="1" height="432" fill="#b0b0b0" opacity="0.1"/><rect x="1232.5" y="192" width="1" height="432" fill="#b0b0b0" opacity="0.1"/><rect x="1242.3" y="192" width="1" height="432" fill="#b0b0b0" opacity="0.1"/><rect x="1252.1" y="192" width="1" height="432" fill="#b0b0b0" opacity="0.1"/><rect x="1261.9" y="192" width="1" height="432" fill="#b0b0b0" opacity="0.1"/><rect x="1271.7" y="192" width="1" height="432" fill="#b0b0b0" opacity="0.1"/><rect x="1281.5" y="192" width="1" height="432" fill="#b0b0b0" opacity="0.1"/><rect x="1291.3" y="192" width="1" height="432" fill="#b0b0b0" opacity="0.1"/><rect x="1301.2" y="192" width="1" height="432" fill="#b0b0b0" opacity="0.1"/><rect x="1311.0" y="192" width="1" height="432" fill="#b0b0b0" opacity="0.1"/><rect x="1320.8" y="192" width="1" height="432" fill="#b0b0b0" opacity="0.1"/><rect x="1330.6" y="192" width="1" height="432" fill="#b0b0b0" opacity="0.1"/><rect x="1340.4" y="192" width="1" height="432" fill="#b0b0b0" opacity="0.1"/><rect x="1350.2" y="192" width="1" height="432" fill="#b0b0b0" opacity="0.1"/><rect x="1360.0" y="192" width="1" height="432" fill="#b0b0b0" opacity="0.1"/><rect x="1369.8" y="192" width="1" height="432" fill="#b0b0b0" opacity="0.1"/><rect x="1379.6" y="192" width="1" height="432" fill="#b0b0b0" opacity="0.1"/><rect x="1389.4" y="192" width="1" height="432" fill="#b0b0b0" opacity="0.1"/><rect x="1399.2" y="192" width="1" height="432" fill="#b0b0b0" opacity="0.1"/><rect x="1409.0" y="192" width="1" height="432" fill="#b0b0b0" opacity="0.1"/><rect x="1418.8" y="192" width="1" height="432" fill="#b0b0b0" opacity="0.1"/><rect x="1428.7" y="192" width="1" height="432" fill="#b0b0b0" opacity="0.1"/><rect x="1438.5" y="192" width="1" height="432" fill="#b0b0b0" opacity="0.1"/><rect x="1448.3" y="192" width="1" height="432" fill="#b0b0b0" opacity="0.1"/><rect x="1458.1" y="192" width="1" height="432" fill="#b0b0b0" opacity="0.1"/><rect x="1467.9" y="192" width="1" height="432" fill="#b0b0b0" opacity="0.1"/><rect x="1477.7" y="192" width="1" height="432" fill="#b0b0b0" opacity="0.1"/><rect x="1487.5" y="192" width="1" height="432" fill="#b0b0b0" opacity="0.1"/><rect x="1497.3" y="192" width="1" height="432" fill="#b0b0b0" opacity="0.1"/><rect x="1507.1" y="192" width="1" height="432" fill="#b0b0b0" opacity="0.1"/><rect x="1022" y="192" width="2" height="432" fill="#161616"/><rect x="983.5" y="192" width="2" height="432" fill="#2a2a2a" opacity="0.6"/><rect x="356" y="622.5" width="1152" height="1.5" fill="#9a9a9a" opacity="0.6"/><rect x="394.65" y="192.75" width="587.3000000000001" height="431.25" fill="none" stroke="#e8e8e8" stroke-width="1.5"/><rect x="406.0" y="340.4" width="9.0" height="15.9" rx="5" fill="#a9cdf6" stroke="#f4f8fc" stroke-width="2"/><rect x="425.6" y="340.4" width="9.0" height="15.9" rx="5" fill="#a9cdf6" stroke="#f4f8fc" stroke-width="2"/><rect x="445.2" y="340.4" width="9.0" height="15.9" rx="5" fill="#a9cdf6" stroke="#f4f8fc" stroke-width="2"/><rect x="464.8" y="340.4" width="9.0" height="15.9" rx="5" fill="#a9cdf6" stroke="#f4f8fc" stroke-width="2"/><rect x="484.4" y="340.4" width="9.0" height="15.9" rx="5" fill="#a9cdf6" stroke="#f4f8fc" stroke-width="2"/><rect x="504.0" y="340.4" width="9.0" height="15.9" rx="5" fill="#a9cdf6" stroke="#f4f8fc" stroke-width="2"/><rect x="523.6" y="340.4" width="9.0" height="15.9" rx="5" fill="#a9cdf6" stroke="#f4f8fc" stroke-width="2"/><rect x="543.2" y="340.4" width="9.0" height="15.9" rx="5" fill="#a9cdf6" stroke="#f4f8fc" stroke-width="2"/><rect x="562.8" y="340.4" width="9.0" height="15.9" rx="5" fill="#a9cdf6" stroke="#f4f8fc" stroke-width="2"/><rect x="582.4" y="340.4" width="9.0" height="15.9" rx="5" fill="#a9cdf6" stroke="#f4f8fc" stroke-width="2"/><rect x="602.0" y="340.4" width="9.0" height="15.9" rx="5" fill="#a9cdf6" stroke="#f4f8fc" stroke-width="2"/><rect x="621.6" y="340.4" width="9.0" height="15.9" rx="5" fill="#a9cdf6" stroke="#f4f8fc" stroke-width="2"/><rect x="641.2" y="340.4" width="9.0" height="15.9" rx="5" fill="#a9cdf6" stroke="#f4f8fc" stroke-width="2"/><rect x="660.8" y="340.4" width="9.0" height="15.9" rx="5" fill="#a9cdf6" stroke="#f4f8fc" stroke-width="2"/><rect x="680.4" y="340.4" width="9.0" height="15.9" rx="5" fill="#a9cdf6" stroke="#f4f8fc" stroke-width="2"/><rect x="700.0" y="340.4" width="9.0" height="15.9" rx="5" fill="#a9cdf6" stroke="#f4f8fc" stroke-width="2"/><rect x="719.6" y="340.4" width="9.0" height="15.9" rx="5" fill="#a9cdf6" stroke="#f4f8fc" stroke-width="2"/><rect x="739.2" y="340.4" width="9.0" height="15.9" rx="5" fill="#a9cdf6" stroke="#f4f8fc" stroke-width="2"/><rect x="758.8" y="340.4" width="9.0" height="15.9" rx="5" fill="#a9cdf6" stroke="#f4f8fc" stroke-width="2"/><rect x="778.4" y="340.4" width="9.0" height="15.9" rx="5" fill="#a9cdf6" stroke="#f4f8fc" stroke-width="2"/><rect x="798.0" y="340.4" width="9.0" height="15.9" rx="5" fill="#a9cdf6" stroke="#f4f8fc" stroke-width="2"/><rect x="817.6" y="340.4" width="9.0" height="15.9" rx="5" fill="#a9cdf6" stroke="#f4f8fc" stroke-width="2"/><rect x="837.2" y="340.4" width="9.0" height="15.9" rx="5" fill="#a9cdf6" stroke="#f4f8fc" stroke-width="2"/><rect x="856.8" y="340.4" width="9.0" height="15.9" rx="5" fill="#a9cdf6" stroke="#f4f8fc" stroke-width="2"/><rect x="876.4" y="340.4" width="9.0" height="15.9" rx="5" fill="#a9cdf6" stroke="#f4f8fc" stroke-width="2"/><rect x="896.0" y="340.4" width="9.0" height="15.9" rx="5" fill="#a9cdf6" stroke="#f4f8fc" stroke-width="2"/><rect x="915.6" y="340.4" width="9.0" height="15.9" rx="5" fill="#a9cdf6" stroke="#f4f8fc" stroke-width="2"/><rect x="935.2" y="340.4" width="9.0" height="15.9" rx="5" fill="#a9cdf6" stroke="#f4f8fc" stroke-width="2"/><rect x="954.8" y="340.4" width="9.0" height="15.9" rx="5" fill="#a9cdf6" stroke="#f4f8fc" stroke-width="2"/><rect x="493.5" y="321.3" width="16.4" height="15.9" rx="4" fill="#a9cdf6" stroke="#f4f8fc" stroke-width="2"/><rect x="807.3" y="321.3" width="16.4" height="15.9" rx="4" fill="#a9cdf6" stroke="#f4f8fc" stroke-width="2"/><rect x="434.4" y="416.7" width="37.6" height="15.9" rx="5" fill="#a9cdf6" stroke="#f4f8fc" stroke-width="2"/><rect x="513.0" y="416.7" width="37.7" height="15.9" rx="5" fill="#a9cdf6" stroke="#f4f8fc" stroke-width="2"/><rect x="591.6" y="416.7" width="26.9" height="15.9" rx="5" fill="#a9cdf6" stroke="#f4f8fc" stroke-width="2"/><rect x="622.0" y="416.7" width="37.5" height="15.9" rx="5" fill="#a9cdf6" stroke="#f4f8fc" stroke-width="2"/><rect x="670.0" y="416.7" width="36.8" height="15.9" rx="5" fill="#a9cdf6" stroke="#f4f8fc" stroke-width="2"/><rect x="748.0" y="416.7" width="37.4" height="15.9" rx="5" fill="#a9cdf6" stroke="#f4f8fc" stroke-width="2"/><rect x="826.7" y="416.7" width="37.0" height="15.9" rx="5" fill="#a9cdf6" stroke="#f4f8fc" stroke-width="2"/><rect x="905.0" y="416.7" width="26.9" height="15.9" rx="5" fill="#a9cdf6" stroke="#f4f8fc" stroke-width="2"/><rect x="935.7" y="416.7" width="36.9" height="15.9" rx="5" fill="#a9cdf6" stroke="#f4f8fc" stroke-width="2"/><rect x="394.9" y="454.9" width="12.1" height="15.9" rx="5" fill="#a9cdf6" stroke="#f4f8fc" stroke-width="2"/><rect x="493.5" y="454.9" width="16.5" height="15.9" rx="5" fill="#a9cdf6" stroke="#f4f8fc" stroke-width="2"/><rect x="524.0" y="454.9" width="17.7" height="15.9" rx="5" fill="#a9cdf6" stroke="#f4f8fc" stroke-width="2"/><rect x="552.0" y="454.9" width="19.6" height="15.9" rx="5" fill="#a9cdf6" stroke="#f4f8fc" stroke-width="2"/><rect x="649.8" y="454.9" width="19.5" height="15.9" rx="5" fill="#a9cdf6" stroke="#f4f8fc" stroke-width="2"/><rect x="680.5" y="454.9" width="12.5" height="15.9" rx="5" fill="#a9cdf6" stroke="#f4f8fc" stroke-width="2"/><rect x="708.8" y="454.9" width="15.6" height="15.9" rx="5" fill="#a9cdf6" stroke="#f4f8fc" stroke-width="2"/><rect x="807.0" y="454.9" width="16.3" height="15.9" rx="5" fill="#a9cdf6" stroke="#f4f8fc" stroke-width="2"/><rect x="837.0" y="454.9" width="17.6" height="15.9" rx="5" fill="#a9cdf6" stroke="#f4f8fc" stroke-width="2"/><rect x="865.7" y="454.9" width="16.1" height="15.9" rx="5" fill="#a9cdf6" stroke="#f4f8fc" stroke-width="2"/><rect x="963.5" y="454.9" width="18.2" height="15.9" rx="5" fill="#a9cdf6" stroke="#f4f8fc" stroke-width="2"/><rect x="954" y="454.8" width="4" height="16.1" fill="#e8f0fa"/><rect x="1061.8" y="359.5" width="37.0" height="15.9" rx="4" fill="#6ba6e6" stroke="#17263a" stroke-width="2"/><rect x="1061.8" y="378.6" width="37.0" height="15.9" rx="4" fill="#6ba6e6" stroke="#17263a" stroke-width="2"/><rect x="1140.3" y="359.5" width="37.0" height="15.9" rx="4" fill="#6ba6e6" stroke="#17263a" stroke-width="2"/><rect x="1140.3" y="378.6" width="37.0" height="15.9" rx="4" fill="#6ba6e6" stroke="#17263a" stroke-width="2"/><rect x="1218.7" y="359.5" width="37.0" height="15.9" rx="4" fill="#6ba6e6" stroke="#17263a" stroke-width="2"/><rect x="1218.7" y="378.6" width="37.0" height="15.9" rx="4" fill="#6ba6e6" stroke="#17263a" stroke-width="2"/><rect x="1297.2" y="359.5" width="37.0" height="15.9" rx="4" fill="#6ba6e6" stroke="#17263a" stroke-width="2"/><rect x="1297.2" y="378.6" width="37.0" height="15.9" rx="4" fill="#6ba6e6" stroke="#17263a" stroke-width="2"/><rect x="1375.7" y="359.5" width="37.0" height="15.9" rx="4" fill="#6ba6e6" stroke="#17263a" stroke-width="2"/><rect x="1375.7" y="378.6" width="37.0" height="15.9" rx="4" fill="#6ba6e6" stroke="#17263a" stroke-width="2"/><rect x="1454.2" y="359.5" width="37.0" height="15.9" rx="4" fill="#6ba6e6" stroke="#17263a" stroke-width="2"/><rect x="1454.2" y="378.6" width="37.0" height="15.9" rx="4" fill="#6ba6e6" stroke="#17263a" stroke-width="2"/><rect x="962" y="198" width="14" height="14" rx="2" fill="#3a3d42"/><text x="969" y="209.5" font-size="11" font-weight="bold" fill="#e0e0e0" text-anchor="middle" font-family="Liberation Sans">T</text><rect x="1002" y="198" width="14" height="14" rx="2" fill="#3a3d42"/><text x="1009" y="209.5" font-size="11" font-weight="bold" fill="#e0e0e0" text-anchor="middle" font-family="Liberation Sans">T</text><rect x="393.9" y="171" width="1" height="21" fill="#2a2a2a" opacity="0.6"/><text x="399.9" y="186" font-size="12" font-weight="bold" fill="#d0d0d0" font-family="Liberation Sans">17</text><rect x="472.4" y="171" width="1" height="21" fill="#2a2a2a" opacity="0.6"/><rect x="550.8" y="171" width="1" height="21" fill="#2a2a2a" opacity="0.6"/><text x="556.8" y="186" font-size="12" font-weight="bold" fill="#d0d0d0" font-family="Liberation Sans">18</text><rect x="629.3" y="171" width="1" height="21" fill="#2a2a2a" opacity="0.6"/><rect x="707.8" y="171" width="1" height="21" fill="#2a2a2a" opacity="0.6"/><text x="713.8" y="186" font-size="12" font-weight="bold" fill="#d0d0d0" font-family="Liberation Sans">19</text><rect x="786.2" y="171" width="1" height="21" fill="#2a2a2a" opacity="0.6"/><rect x="864.7" y="171" width="1" height="21" fill="#2a2a2a" opacity="0.6"/><text x="870.7" y="186" font-size="12" font-weight="bold" fill="#d0d0d0" font-family="Liberation Sans">20</text><rect x="943.2" y="171" width="1" height="21" fill="#2a2a2a" opacity="0.6"/><rect x="1021.6" y="171" width="1" height="21" fill="#2a2a2a" opacity="0.6"/><text x="1027.6" y="186" font-size="12" font-weight="bold" fill="#d0d0d0" font-family="Liberation Sans">21</text><rect x="1100.1" y="171" width="1" height="21" fill="#2a2a2a" opacity="0.6"/><rect x="1178.6" y="171" width="1" height="21" fill="#2a2a2a" opacity="0.6"/><text x="1184.6" y="186" font-size="12" font-weight="bold" fill="#d0d0d0" font-family="Liberation Sans">22</text><rect x="1257.0" y="171" width="1" height="21" fill="#2a2a2a" opacity="0.6"/><rect x="1335.5" y="171" width="1" height="21" fill="#2a2a2a" opacity="0.6"/><text x="1341.5" y="186" font-size="12" font-weight="bold" fill="#d0d0d0" font-family="Liberation Sans">23</text><rect x="1413.9" y="171" width="1" height="21" fill="#2a2a2a" opacity="0.6"/><rect x="1492.4" y="171" width="1" height="21" fill="#2a2a2a" opacity="0.6"/><text x="1498.4" y="186" font-size="12" font-weight="bold" fill="#d0d0d0" font-family="Liberation Sans">24</text><rect x="1466" y="171" width="1.5" height="21" fill="#c04030"/><path d="M390 174 H395 V190 L386 183 L389 182 L392 185 V174Z" fill="#2aa0e0"/><path d="M983.5 174 V191 L992 185 L986 184 V174Z" fill="#2aa0e0"/><path d="M1131 173 H1140 V191 H1138.5 V179Z" fill="#f0f0f0"/><rect x="356" y="631" width="1152" height="52.5" fill="#6d6d6d"/><rect x="393.9" y="631" width="588.8000000000001" height="52.5" fill="#8e8e8e"/><rect x="364.5" y="631" width="1" height="52.5" fill="#b8b8b8" opacity="0.2"/><rect x="374.3" y="631" width="1" height="52.5" fill="#b8b8b8" opacity="0.2"/><rect x="384.1" y="631" width="1" height="52.5" fill="#b8b8b8" opacity="0.2"/><rect x="393.9" y="631" width="1" height="52.5" fill="#b8b8b8" opacity="0.5"/><rect x="403.7" y="631" width="1" height="52.5" fill="#b8b8b8" opacity="0.2"/><rect x="413.5" y="631" width="1" height="52.5" fill="#b8b8b8" opacity="0.2"/><rect x="423.3" y="631" width="1" height="52.5" fill="#b8b8b8" opacity="0.2"/><rect x="433.1" y="631" width="1" height="52.5" fill="#b8b8b8" opacity="0.28"/><rect x="442.9" y="631" width="1" height="52.5" fill="#b8b8b8" opacity="0.2"/><rect x="452.7" y="631" width="1" height="52.5" fill="#b8b8b8" opacity="0.2"/><rect x="462.6" y="631" width="1" height="52.5" fill="#b8b8b8" opacity="0.2"/><rect x="472.4" y="631" width="1" height="52.5" fill="#b8b8b8" opacity="0.28"/><rect x="482.2" y="631" width="1" height="52.5" fill="#b8b8b8" opacity="0.2"/><rect x="492.0" y="631" width="1" height="52.5" fill="#b8b8b8" opacity="0.2"/><rect x="501.8" y="631" width="1" height="52.5" fill="#b8b8b8" opacity="0.2"/><rect x="511.6" y="631" width="1" height="52.5" fill="#b8b8b8" opacity="0.28"/><rect x="521.4" y="631" width="1" height="52.5" fill="#b8b8b8" opacity="0.2"/><rect x="531.2" y="631" width="1" height="52.5" fill="#b8b8b8" opacity="0.2"/><rect x="541.0" y="631" width="1" height="52.5" fill="#b8b8b8" opacity="0.2"/><rect x="550.8" y="631" width="1" height="52.5" fill="#b8b8b8" opacity="0.5"/><rect x="560.6" y="631" width="1" height="52.5" fill="#b8b8b8" opacity="0.2"/><rect x="570.4" y="631" width="1" height="52.5" fill="#b8b8b8" opacity="0.2"/><rect x="580.3" y="631" width="1" height="52.5" fill="#b8b8b8" opacity="0.2"/><rect x="590.1" y="631" width="1" height="52.5" fill="#b8b8b8" opacity="0.28"/><rect x="599.9" y="631" width="1" height="52.5" fill="#b8b8b8" opacity="0.2"/><rect x="609.7" y="631" width="1" height="52.5" fill="#b8b8b8" opacity="0.2"/><rect x="619.5" y="631" width="1" height="52.5" fill="#b8b8b8" opacity="0.2"/><rect x="629.3" y="631" width="1" height="52.5" fill="#b8b8b8" opacity="0.28"/><rect x="639.1" y="631" width="1" height="52.5" fill="#b8b8b8" opacity="0.2"/><rect x="648.9" y="631" width="1" height="52.5" fill="#b8b8b8" opacity="0.2"/><rect x="658.7" y="631" width="1" height="52.5" fill="#b8b8b8" opacity="0.2"/><rect x="668.5" y="631" width="1" height="52.5" fill="#b8b8b8" opacity="0.28"/><rect x="678.3" y="631" width="1" height="52.5" fill="#b8b8b8" opacity="0.2"/><rect x="688.1" y="631" width="1" height="52.5" fill="#b8b8b8" opacity="0.2"/><rect x="698.0" y="631" width="1" height="52.5" fill="#b8b8b8" opacity="0.2"/><rect x="707.8" y="631" width="1" height="52.5" fill="#b8b8b8" opacity="0.5"/><rect x="717.6" y="631" width="1" height="52.5" fill="#b8b8b8" opacity="0.2"/><rect x="727.4" y="631" width="1" height="52.5" fill="#b8b8b8" opacity="0.2"/><rect x="737.2" y="631" width="1" height="52.5" fill="#b8b8b8" opacity="0.2"/><rect x="747.0" y="631" width="1" height="52.5" fill="#b8b8b8" opacity="0.28"/><rect x="756.8" y="631" width="1" height="52.5" fill="#b8b8b8" opacity="0.2"/><rect x="766.6" y="631" width="1" height="52.5" fill="#b8b8b8" opacity="0.2"/><rect x="776.4" y="631" width="1" height="52.5" fill="#b8b8b8" opacity="0.2"/><rect x="786.2" y="631" width="1" height="52.5" fill="#b8b8b8" opacity="0.28"/><rect x="796.0" y="631" width="1" height="52.5" fill="#b8b8b8" opacity="0.2"/><rect x="805.8" y="631" width="1" height="52.5" fill="#b8b8b8" opacity="0.2"/><rect x="815.6" y="631" width="1" height="52.5" fill="#b8b8b8" opacity="0.2"/><rect x="825.5" y="631" width="1" height="52.5" fill="#b8b8b8" opacity="0.28"/><rect x="835.3" y="631" width="1" height="52.5" fill="#b8b8b8" opacity="0.2"/><rect x="845.1" y="631" width="1" height="52.5" fill="#b8b8b8" opacity="0.2"/><rect x="854.9" y="631" width="1" height="52.5" fill="#b8b8b8" opacity="0.2"/><rect x="864.7" y="631" width="1" height="52.5" fill="#b8b8b8" opacity="0.5"/><rect x="874.5" y="631" width="1" height="52.5" fill="#b8b8b8" opacity="0.2"/><rect x="884.3" y="631" width="1" height="52.5" fill="#b8b8b8" opacity="0.2"/><rect x="894.1" y="631" width="1" height="52.5" fill="#b8b8b8" opacity="0.2"/><rect x="903.9" y="631" width="1" height="52.5" fill="#b8b8b8" opacity="0.28"/><rect x="913.7" y="631" width="1" height="52.5" fill="#b8b8b8" opacity="0.2"/><rect x="923.5" y="631" width="1" height="52.5" fill="#b8b8b8" opacity="0.2"/><rect x="933.3" y="631" width="1" height="52.5" fill="#b8b8b8" opacity="0.2"/><rect x="943.2" y="631" width="1" height="52.5" fill="#b8b8b8" opacity="0.28"/><rect x="953.0" y="631" width="1" height="52.5" fill="#b8b8b8" opacity="0.2"/><rect x="962.8" y="631" width="1" height="52.5" fill="#b8b8b8" opacity="0.2"/><rect x="972.6" y="631" width="1" height="52.5" fill="#b8b8b8" opacity="0.2"/><rect x="982.4" y="631" width="1" height="52.5" fill="#b8b8b8" opacity="0.28"/><rect x="992.2" y="631" width="1" height="52.5" fill="#b8b8b8" opacity="0.2"/><rect x="1002.0" y="631" width="1" height="52.5" fill="#b8b8b8" opacity="0.2"/><rect x="1011.8" y="631" width="1" height="52.5" fill="#b8b8b8" opacity="0.2"/><rect x="1021.6" y="631" width="1" height="52.5" fill="#b8b8b8" opacity="0.5"/><rect x="1031.4" y="631" width="1" height="52.5" fill="#b8b8b8" opacity="0.2"/><rect x="1041.2" y="631" width="1" height="52.5" fill="#b8b8b8" opacity="0.2"/><rect x="1051.0" y="631" width="1" height="52.5" fill="#b8b8b8" opacity="0.2"/><rect x="1060.9" y="631" width="1" height="52.5" fill="#b8b8b8" opacity="0.28"/><rect x="1070.7" y="631" width="1" height="52.5" fill="#b8b8b8" opacity="0.2"/><rect x="1080.5" y="631" width="1" height="52.5" fill="#b8b8b8" opacity="0.2"/><rect x="1090.3" y="631" width="1" height="52.5" fill="#b8b8b8" opacity="0.2"/><rect x="1100.1" y="631" width="1" height="52.5" fill="#b8b8b8" opacity="0.28"/><rect x="1109.9" y="631" width="1" height="52.5" fill="#b8b8b8" opacity="0.2"/><rect x="1119.7" y="631" width="1" height="52.5" fill="#b8b8b8" opacity="0.2"/><rect x="1129.5" y="631" width="1" height="52.5" fill="#b8b8b8" opacity="0.2"/><rect x="1139.3" y="631" width="1" height="52.5" fill="#b8b8b8" opacity="0.28"/><rect x="1149.1" y="631" width="1" height="52.5" fill="#b8b8b8" opacity="0.2"/><rect x="1158.9" y="631" width="1" height="52.5" fill="#b8b8b8" opacity="0.2"/><rect x="1168.7" y="631" width="1" height="52.5" fill="#b8b8b8" opacity="0.2"/><rect x="1178.6" y="631" width="1" height="52.5" fill="#b8b8b8" opacity="0.5"/><rect x="1188.4" y="631" width="1" height="52.5" fill="#b8b8b8" opacity="0.2"/><rect x="1198.2" y="631" width="1" height="52.5" fill="#b8b8b8" opacity="0.2"/><rect x="1208.0" y="631" width="1" height="52.5" fill="#b8b8b8" opacity="0.2"/><rect x="1217.8" y="631" width="1" height="52.5" fill="#b8b8b8" opacity="0.28"/><rect x="1227.6" y="631" width="1" height="52.5" fill="#b8b8b8" opacity="0.2"/><rect x="1237.4" y="631" width="1" height="52.5" fill="#b8b8b8" opacity="0.2"/><rect x="1247.2" y="631" width="1" height="52.5" fill="#b8b8b8" opacity="0.2"/><rect x="1257.0" y="631" width="1" height="52.5" fill="#b8b8b8" opacity="0.28"/><rect x="1266.8" y="631" width="1" height="52.5" fill="#b8b8b8" opacity="0.2"/><rect x="1276.6" y="631" width="1" height="52.5" fill="#b8b8b8" opacity="0.2"/><rect x="1286.4" y="631" width="1" height="52.5" fill="#b8b8b8" opacity="0.2"/><rect x="1296.2" y="631" width="1" height="52.5" fill="#b8b8b8" opacity="0.28"/><rect x="1306.1" y="631" width="1" height="52.5" fill="#b8b8b8" opacity="0.2"/><rect x="1315.9" y="631" width="1" height="52.5" fill="#b8b8b8" opacity="0.2"/><rect x="1325.7" y="631" width="1" height="52.5" fill="#b8b8b8" opacity="0.2"/><rect x="1335.5" y="631" width="1" height="52.5" fill="#b8b8b8" opacity="0.5"/><rect x="1345.3" y="631" width="1" height="52.5" fill="#b8b8b8" opacity="0.2"/><rect x="1355.1" y="631" width="1" height="52.5" fill="#b8b8b8" opacity="0.2"/><rect x="1364.9" y="631" width="1" height="52.5" fill="#b8b8b8" opacity="0.2"/><rect x="1374.7" y="631" width="1" height="52.5" fill="#b8b8b8" opacity="0.28"/><rect x="1384.5" y="631" width="1" height="52.5" fill="#b8b8b8" opacity="0.2"/><rect x="1394.3" y="631" width="1" height="52.5" fill="#b8b8b8" opacity="0.2"/><rect x="1404.1" y="631" width="1" height="52.5" fill="#b8b8b8" opacity="0.2"/><rect x="1413.9" y="631" width="1" height="52.5" fill="#b8b8b8" opacity="0.28"/><rect x="1423.8" y="631" width="1" height="52.5" fill="#b8b8b8" opacity="0.2"/><rect x="1433.6" y="631" width="1" height="52.5" fill="#b8b8b8" opacity="0.2"/><rect x="1443.4" y="631" width="1" height="52.5" fill="#b8b8b8" opacity="0.2"/><rect x="1453.2" y="631" width="1" height="52.5" fill="#b8b8b8" opacity="0.28"/><rect x="1463.0" y="631" width="1" height="52.5" fill="#b8b8b8" opacity="0.2"/><rect x="1472.8" y="631" width="1" height="52.5" fill="#b8b8b8" opacity="0.2"/><rect x="1482.6" y="631" width="1" height="52.5" fill="#b8b8b8" opacity="0.2"/><rect x="1492.4" y="631" width="1" height="52.5" fill="#b8b8b8" opacity="0.5"/><rect x="1502.2" y="631" width="1" height="52.5" fill="#b8b8b8" opacity="0.2"/><rect x="356" y="682.0" width="1152" height="1.5" fill="#9a9a9a" opacity="0.6"/><rect x="394.65" y="631.75" width="587.3000000000001" height="51.75" fill="none" stroke="#e8e8e8" stroke-width="1.5"/><rect x="397.8" y="635" width="1.8" height="47.5" fill="#9ab4d6"/><path d="M398.7 630.5 L403.2 635 L398.7 639.5 L394.2 635Z" fill="#f6f6f6"/><rect x="408.9" y="645" width="1.8" height="37.5" fill="#9ab4d6"/><path d="M409.8 640.5 L414.3 645 L409.8 649.5 L405.3 645Z" fill="#f6f6f6"/><rect x="428.4" y="645" width="1.8" height="37.5" fill="#9ab4d6"/><path d="M429.3 640.5 L433.8 645 L429.3 649.5 L424.8 645Z" fill="#f6f6f6"/><rect x="436.8" y="651" width="1.8" height="31.5" fill="#9ab4d6"/><path d="M437.7 646.5 L442.2 651 L437.7 655.5 L433.2 651Z" fill="#f6f6f6"/><rect x="448.1" y="645" width="1.8" height="37.5" fill="#9ab4d6"/><path d="M449.0 640.5 L453.5 645 L449.0 649.5 L444.5 645Z" fill="#f6f6f6"/><rect x="467.7" y="645" width="1.8" height="37.5" fill="#9ab4d6"/><path d="M468.6 640.5 L473.1 645 L468.6 649.5 L464.1 645Z" fill="#f6f6f6"/><rect x="487.1" y="645" width="1.8" height="37.5" fill="#9ab4d6"/><path d="M488.0 640.5 L492.5 645 L488.0 649.5 L483.5 645Z" fill="#f6f6f6"/><rect x="494.5" y="635" width="1.8" height="47.5" fill="#9ab4d6"/><path d="M495.4 630.5 L499.9 635 L495.4 639.5 L490.9 635Z" fill="#f6f6f6"/><rect x="506.8" y="645" width="1.8" height="37.5" fill="#9ab4d6"/><path d="M507.7 640.5 L512.2 645 L507.7 649.5 L503.2 645Z" fill="#f6f6f6"/><rect x="515.4" y="651" width="1.8" height="31.5" fill="#9ab4d6"/><path d="M516.3 646.5 L520.8 651 L516.3 655.5 L511.8 651Z" fill="#f6f6f6"/><rect x="527.7" y="635" width="1.8" height="47.5" fill="#9ab4d6"/><path d="M528.6 630.5 L533.1 635 L528.6 639.5 L524.1 635Z" fill="#f6f6f6"/><path d="M528.6 640.5 L533.1 645 L528.6 649.5 L524.1 645Z" fill="#f6f6f6"/><rect x="545.8" y="643" width="1.8" height="39.5" fill="#9ab4d6"/><path d="M546.7 638.5 L551.2 643 L546.7 647.5 L542.2 643Z" fill="#f6f6f6"/><rect x="554.6" y="635" width="1.8" height="47.5" fill="#9ab4d6"/><path d="M555.5 630.5 L560.0 635 L555.5 639.5 L551.0 635Z" fill="#f6f6f6"/><rect x="565.7" y="645" width="1.8" height="37.5" fill="#9ab4d6"/><path d="M566.6 640.5 L571.1 645 L566.6 649.5 L562.1 645Z" fill="#f6f6f6"/><rect x="585.3" y="645" width="1.8" height="37.5" fill="#9ab4d6"/><path d="M586.2 640.5 L590.7 645 L586.2 649.5 L581.7 645Z" fill="#f6f6f6"/><rect x="593.7" y="643" width="1.8" height="39.5" fill="#9ab4d6"/><path d="M594.6 638.5 L599.1 643 L594.6 647.5 L590.1 643Z" fill="#f6f6f6"/><rect x="604.8" y="645" width="1.8" height="37.5" fill="#9ab4d6"/><path d="M605.7 640.5 L610.2 645 L605.7 649.5 L601.2 645Z" fill="#f6f6f6"/><rect x="623.0" y="645" width="1.8" height="37.5" fill="#9ab4d6"/><path d="M623.9 640.5 L628.4 645 L623.9 649.5 L619.4 645Z" fill="#f6f6f6"/><path d="M623.9 645.5 L628.4 650 L623.9 654.5 L619.4 650Z" fill="#f6f6f6"/><rect x="643.9" y="645" width="1.8" height="37.5" fill="#9ab4d6"/><path d="M644.8 640.5 L649.3 645 L644.8 649.5 L640.3 645Z" fill="#f6f6f6"/><rect x="652.3" y="635" width="1.8" height="47.5" fill="#9ab4d6"/><path d="M653.2 630.5 L657.7 635 L653.2 639.5 L648.7 635Z" fill="#f6f6f6"/><rect x="663.4" y="645" width="1.8" height="37.5" fill="#9ab4d6"/><path d="M664.3 640.5 L668.8 645 L664.3 649.5 L659.8 645Z" fill="#f6f6f6"/><rect x="671.8" y="651" width="1.8" height="31.5" fill="#9ab4d6"/><path d="M672.7 646.5 L677.2 651 L672.7 655.5 L668.2 651Z" fill="#f6f6f6"/><rect x="682.1" y="635" width="1.8" height="47.5" fill="#9ab4d6"/><path d="M683.0 630.5 L687.5 635 L683.0 639.5 L678.5 635Z" fill="#f6f6f6"/><path d="M683.0 640.5 L687.5 645 L683.0 649.5 L678.5 645Z" fill="#f6f6f6"/><rect x="702.7" y="645" width="1.8" height="37.5" fill="#9ab4d6"/><path d="M703.6 640.5 L708.1 645 L703.6 649.5 L699.1 645Z" fill="#f6f6f6"/><rect x="711.4" y="635" width="1.8" height="47.5" fill="#9ab4d6"/><path d="M712.3 630.5 L716.8 635 L712.3 639.5 L707.8 635Z" fill="#f6f6f6"/><rect x="722.1" y="645" width="1.8" height="37.5" fill="#9ab4d6"/><path d="M723.0 640.5 L727.5 645 L723.0 649.5 L718.5 645Z" fill="#f6f6f6"/><rect x="741.7" y="645" width="1.8" height="37.5" fill="#9ab4d6"/><path d="M742.6 640.5 L747.1 645 L742.6 649.5 L738.1 645Z" fill="#f6f6f6"/><rect x="750.3" y="651" width="1.8" height="31.5" fill="#9ab4d6"/><path d="M751.2 646.5 L755.7 651 L751.2 655.5 L746.7 651Z" fill="#f6f6f6"/><rect x="761.4" y="645" width="1.8" height="37.5" fill="#9ab4d6"/><path d="M762.3 640.5 L766.8 645 L762.3 649.5 L757.8 645Z" fill="#f6f6f6"/><rect x="781.0" y="645" width="1.8" height="37.5" fill="#9ab4d6"/><path d="M781.9 640.5 L786.4 645 L781.9 649.5 L777.4 645Z" fill="#f6f6f6"/><rect x="800.8" y="645" width="1.8" height="37.5" fill="#9ab4d6"/><path d="M801.7 640.5 L806.2 645 L801.7 649.5 L797.2 645Z" fill="#f6f6f6"/><rect x="810.3" y="635" width="1.8" height="47.5" fill="#9ab4d6"/><path d="M811.2 630.5 L815.7 635 L811.2 639.5 L806.7 635Z" fill="#f6f6f6"/><rect x="820.4" y="645" width="1.8" height="37.5" fill="#9ab4d6"/><path d="M821.3 640.5 L825.8 645 L821.3 649.5 L816.8 645Z" fill="#f6f6f6"/><rect x="828.8" y="651" width="1.8" height="31.5" fill="#9ab4d6"/><path d="M829.7 646.5 L834.2 651 L829.7 655.5 L825.2 651Z" fill="#f6f6f6"/><rect x="839.9" y="635" width="1.8" height="47.5" fill="#9ab4d6"/><path d="M840.8 630.5 L845.3 635 L840.8 639.5 L836.3 635Z" fill="#f6f6f6"/><path d="M840.8 640.5 L845.3 645 L840.8 649.5 L836.3 645Z" fill="#f6f6f6"/><rect x="859.3" y="645" width="1.8" height="37.5" fill="#9ab4d6"/><path d="M860.2 640.5 L864.7 645 L860.2 649.5 L855.7 645Z" fill="#f6f6f6"/><rect x="867.8" y="635" width="1.8" height="47.5" fill="#9ab4d6"/><path d="M868.7 630.5 L873.2 635 L868.7 639.5 L864.2 635Z" fill="#f6f6f6"/><rect x="878.9" y="645" width="1.8" height="37.5" fill="#9ab4d6"/><path d="M879.8 640.5 L884.3 645 L879.8 649.5 L875.3 645Z" fill="#f6f6f6"/><rect x="898.7" y="645" width="1.8" height="37.5" fill="#9ab4d6"/><path d="M899.6 640.5 L904.1 645 L899.6 649.5 L895.1 645Z" fill="#f6f6f6"/><rect x="907.1" y="643" width="1.8" height="39.5" fill="#9ab4d6"/><path d="M908.0 638.5 L912.5 643 L908.0 647.5 L903.5 643Z" fill="#f6f6f6"/><rect x="918.3" y="645" width="1.8" height="37.5" fill="#9ab4d6"/><path d="M919.2 640.5 L923.7 645 L919.2 649.5 L914.7 645Z" fill="#f6f6f6"/><rect x="939.1" y="645" width="1.8" height="37.5" fill="#9ab4d6"/><path d="M940.0 640.5 L944.5 645 L940.0 649.5 L935.5 645Z" fill="#f6f6f6"/><path d="M940.0 645.5 L944.5 650 L940.0 654.5 L935.5 650Z" fill="#f6f6f6"/><rect x="957.2" y="635" width="1.8" height="47.5" fill="#9ab4d6"/><path d="M958.1 630.5 L962.6 635 L958.1 639.5 L953.6 635Z" fill="#f6f6f6"/><path d="M958.1 640.5 L962.6 645 L958.1 649.5 L953.6 645Z" fill="#f6f6f6"/><rect x="965.7" y="635" width="1.8" height="47.5" fill="#9ab4d6"/><path d="M966.6 630.5 L971.1 635 L966.6 639.5 L962.1 635Z" fill="#f6f6f6"/><rect x="1063.6" y="641" width="1.8" height="40" fill="#6aa8ea"/><path d="M1064.5 637 L1068.5 641 L1064.5 645 L1060.5 641Z" fill="#7ab8f2"/><path d="M1064.5 648 L1068.5 652 L1064.5 656 L1060.5 652Z" fill="#7ab8f2"/><rect x="1142.1" y="641" width="1.8" height="40" fill="#6aa8ea"/><path d="M1143.0 637 L1147.0 641 L1143.0 645 L1139.0 641Z" fill="#7ab8f2"/><path d="M1143.0 648 L1147.0 652 L1143.0 656 L1139.0 652Z" fill="#7ab8f2"/><rect x="1220.5" y="641" width="1.8" height="40" fill="#6aa8ea"/><path d="M1221.4 637 L1225.4 641 L1221.4 645 L1217.4 641Z" fill="#7ab8f2"/><path d="M1221.4 648 L1225.4 652 L1221.4 656 L1217.4 652Z" fill="#7ab8f2"/><rect x="1299.0" y="641" width="1.8" height="40" fill="#6aa8ea"/><path d="M1299.9 637 L1303.9 641 L1299.9 645 L1295.9 641Z" fill="#7ab8f2"/><path d="M1299.9 648 L1303.9 652 L1299.9 656 L1295.9 652Z" fill="#7ab8f2"/><rect x="1377.5" y="641" width="1.8" height="40" fill="#6aa8ea"/><path d="M1378.4 637 L1382.4 641 L1378.4 645 L1374.4 641Z" fill="#7ab8f2"/><path d="M1378.4 648 L1382.4 652 L1378.4 656 L1374.4 652Z" fill="#7ab8f2"/><rect x="1455.9" y="641" width="1.8" height="40" fill="#6aa8ea"/><path d="M1456.8 637 L1460.8 641 L1456.8 645 L1452.8 641Z" fill="#7ab8f2"/><path d="M1456.8 648 L1460.8 652 L1456.8 656 L1452.8 652Z" fill="#7ab8f2"/></svg>
<svg width="1536" height="848"><rect x="241" y="242.4" width="114" height="2" fill="#4a4a4a"/><rect x="241" y="376.0" width="114" height="2" fill="#4a4a4a"/><rect x="241" y="471.4" width="114" height="2" fill="#4a4a4a"/><rect x="241" y="605.0" width="114" height="2" fill="#4a4a4a"/><rect x="316" y="214.0" width="39" height="1.5" fill="#5a5a5a"/><rect x="316" y="271.3" width="39" height="1.5" fill="#5a5a5a"/><rect x="316" y="309.4" width="39" height="1.5" fill="#5a5a5a"/><rect x="316" y="347.6" width="39" height="1.5" fill="#5a5a5a"/><rect x="316" y="404.9" width="39" height="1.5" fill="#5a5a5a"/><rect x="316" y="443.0" width="39" height="1.5" fill="#5a5a5a"/><rect x="316" y="500.3" width="39" height="1.5" fill="#5a5a5a"/><rect x="316" y="538.4" width="39" height="1.5" fill="#5a5a5a"/><rect x="316" y="576.6" width="39" height="1.5" fill="#5a5a5a"/><rect x="241.5" y="206.2" width="74.5" height="18.1" fill="#373737"/><rect x="241.5" y="263.5" width="74.5" height="18.1" fill="#373737"/><rect x="241.5" y="301.6" width="74.5" height="18.1" fill="#373737"/><rect x="241.5" y="339.8" width="74.5" height="18.1" fill="#373737"/><rect x="241.5" y="397.8" width="74" height="16.6" fill="#a9cde0" stroke="#152028" stroke-width="1.5"/><rect x="241.5" y="435.2" width="74.5" height="18.1" fill="#373737"/><rect x="241.5" y="492.5" width="74.5" height="18.1" fill="#373737"/><rect x="241.5" y="530.6" width="74.5" height="18.1" fill="#373737"/><rect x="241.5" y="568.8" width="74.5" height="18.1" fill="#373737"/><rect x="345" y="231.4" width="9" height="10.5" fill="#8a8a8a"/><text x="349.5" y="240.4" font-size="10.5" font-weight="bold" fill="#dcdcdc" text-anchor="middle" font-family="Liberation Sans">2</text><rect x="345" y="460.4" width="9" height="10.5" fill="#8a8a8a"/><text x="349.5" y="469.4" font-size="10.5" font-weight="bold" fill="#dcdcdc" text-anchor="middle" font-family="Liberation Sans">1</text></svg>
<svg width="1536" height="848"><path d="M167.5 182 H176.5 L172 187.5Z" fill="#1c1c1c"/><path d="M167.5 625.5 H176.5 L172 631Z" fill="#1c1c1c"/><text x="170" y="652" font-size="9" font-weight="bold" fill="#ddd" font-family="Liberation Sans">a</text><text x="176" y="660" font-size="9" font-weight="bold" fill="#ddd" font-family="Liberation Sans">z</text></svg>
<svg width="1536" height="848"><circle cx="207" cy="148" r="5" fill="none" stroke="#e6e6e6" stroke-width="2.2"/><path d="M210.5 151.5 L215.5 156.5" stroke="#e6e6e6" stroke-width="3" stroke-linecap="round"/><path d="M222 155 H229 L225.5 159Z" fill="#ddd"/><g stroke="#d8f0ff" stroke-width="1.6" fill="none"><path d="M251.5 143 H262 V158 H251.5"/><path d="M259 150.5 H253 M255.5 147.5 L252.5 150.5 L255.5 153.5"/><path d="M265.5 150.5 H271 M268.5 147.5 L271.5 150.5 L268.5 153.5"/></g><g fill="#d8f0ff"><rect x="296" y="142" width="6" height="17" opacity="0.95"/><rect x="297.5" y="149.5" width="3" height="2" fill="#2a8abf"/><path d="M288 144 L295 150.5 L288 157Z M310 150.5 L303 145 L303 156Z" opacity="0.85"/><rect x="287" y="145.5" width="1" height="10"/><rect x="289" y="146.5" width="1" height="8"/><rect x="291" y="147.5" width="1" height="6"/><rect x="293" y="148.5" width="1" height="4"/><rect x="305" y="146.5" width="1" height="8"/><rect x="307" y="147.5" width="1" height="6"/><rect x="309" y="148.5" width="1" height="4"/></g><path d="M333 160 L329.5 155 C328.5 153.5 330 152 331.5 153.5 L333.5 155.5 L332.5 146 C332.3 144.5 334.3 144.2 334.6 145.8 L336 152 L336 143.5 C336 142 338.2 142 338.2 143.5 L339 151.5 L340.5 144 C340.8 142.5 342.8 143 342.6 144.5 L342 152 L344.3 147 C344.9 145.6 346.7 146.3 346.2 147.8 L344 156 L344 160" fill="none" stroke="#d8f0ff" stroke-width="1.3"/><path d="M376 145 H380 L385 140.5 V157.5 L380 153 H376Z" fill="#d8d8d8"/><path d="M378 140 V158" stroke="#d8d8d8" stroke-width="1.5"/><path d="M388 145.5 Q390.5 149 388 152.5 M391 143 Q395 149 391 155 M394 140.5 Q399.5 149 394 157.5" stroke="#d8d8d8" stroke-width="1.6" fill="none"/><path d="M413 157 L414.5 152 L427 139.5 L430.5 143 L418 155.5Z" fill="#dcdcdc"/><path d="M431 155 H438 L434.5 159Z" fill="#ddd"/><path d="M533 144 H540 L536.5 148Z" fill="#e0e0e0"/><ellipse cx="549" cy="152" rx="3" ry="2.4" fill="#4cc27a"/><path d="M551.3 152 V139 Q553 143 557 145 Q558 148 555.5 150" stroke="#4cc27a" stroke-width="1.6" fill="none"/><path d="M566 144 H574 L570 148.5Z" fill="#e0e0e0"/><circle cx="613" cy="146" r="5.2" fill="#4cc27a"/><circle cx="613" cy="146" r="2.2" fill="#0a5a2a"/><path d="M624 143 H627 L633 138.5 V153.5 L627 149 H624Z" fill="#4cc27a"/><g stroke="#d0d0d0" stroke-width="1.3" fill="none"><rect x="655" y="144" width="7" height="3"/><rect x="671" y="139.5" width="9" height="4.5"/><rect x="671" y="146.5" width="9" height="4.5"/></g><path d="M663 145.5 H668 M666 143.5 L668.5 145.5 L666 147.5" stroke="#d0d0d0" stroke-width="1.3" fill="none"/><g stroke="#f0f8ff" stroke-width="1.6" fill="none"><path d="M699 138 V153 M696.5 150 L699 153.5 L701.5 150"/><path d="M705 153 V138 M702.5 141 L705 137.5 L707.5 141"/><path d="M715 139 V153 M718 139 V153"/></g><circle cx="711" cy="146" r="1.6" fill="#f0f8ff"/><circle cx="722" cy="146" r="1.6" fill="#f0f8ff"/><path d="M898 139.5 V152 L901 149 L903.5 154 L905.5 153 L903 148.5 L907 148Z" fill="#cfcfcf"/><ellipse cx="1017.5" cy="151.5" rx="3.2" ry="2.5" fill="#f0f0f0"/><path d="M1020 151.5 V139" stroke="#f0f0f0" stroke-width="1.6"/><path d="M1132 142 H1140 L1136 146.5Z" fill="#e0e0e0"/><ellipse cx="1145" cy="152" rx="3" ry="2.4" fill="#4cc27a"/><path d="M1147.3 152 V139 Q1149 143 1153 145 Q1154 148 1151.5 150" stroke="#4cc27a" stroke-width="1.6" fill="none"/><path d="M1250 142 H1260 L1255 147Z" fill="#e0e0e0"/><rect x="1290.5" y="137.5" width="15" height="16" fill="none" stroke="#4cc27a" stroke-width="1.6"/><path d="M1295.5 138 V153 M1300.5 138 V153" stroke="#4cc27a" stroke-width="1.4"/><rect x="1293.5" y="138" width="3" height="8" fill="#4cc27a"/><rect x="1298.5" y="138" width="3" height="8" fill="#4cc27a"/><path d="M1513.5 141 H1522.5 L1518 146Z" fill="#111"/><g stroke="#c8c8c8" stroke-width="1.2" fill="none"><rect x="196.5" y="175.5" width="14" height="11"/><path d="M196.5 179.2 H210.5 M196.5 183 H210.5"/></g><path d="M213 175 H220 L216.5 179Z" fill="#d8d8d8"/></svg></body></html>
